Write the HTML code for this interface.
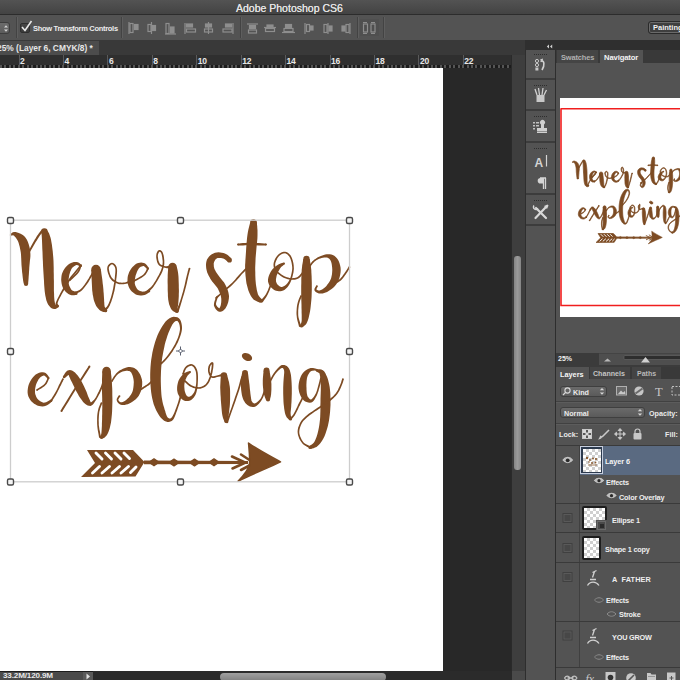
<!DOCTYPE html>
<html><head><meta charset="utf-8">
<style>
*{margin:0;padding:0;box-sizing:border-box}
html,body{width:680px;height:680px;overflow:hidden;background:#535353;font-family:"Liberation Sans",sans-serif;position:relative}
.a{position:absolute}
#title{left:0;top:0;width:680px;height:15px;background:linear-gradient(#535353,#434343);border-bottom:1px solid #2c2c2c}
#title span{position:absolute;left:236px;top:1.5px;font-size:10.5px;color:#e4e4e4;letter-spacing:0px;text-shadow:0 0 0.4px #e4e4e4}
#opts{left:0;top:15px;width:680px;height:25px;background:#535353}
.sep{position:absolute;top:19px;width:1px;height:18px;background:#414141;border-right:1px solid #5f5f5f}
#tabbar{left:0;top:40px;width:525px;height:15px;background:#393939}
#tab{left:0;top:41px;width:99px;height:14px;background:#4c4c4c}
#tab span{position:absolute;left:-3px;top:2px;font-size:8.4px;font-weight:bold;color:#e6e6e6;white-space:nowrap}
#ruler{left:0;top:55px;width:512px;height:13px;background:#2f2f2f}
#canvas{left:0;top:68px;width:443px;height:603px;background:#fff;overflow:hidden}
#paste{left:443px;top:68px;width:69px;height:603px;background:#282828}
#vtrack{left:511px;top:55px;width:14px;height:625px;background:#3e3e3e;border-left:1px solid #2a2a2a}
#status{left:0;top:671px;width:512px;height:9px;background:#2b2b2b}
#dock{left:525px;top:40px;width:31px;height:640px;background:#535353;border-left:1px solid #2e2e2e;border-right:1px solid #2e2e2e}
#rpanel{left:556px;top:40px;width:124px;height:640px;background:#535353}
.ck{background-color:#fff;background-image:linear-gradient(45deg,#cfcfcf 25%,transparent 25%,transparent 75%,#cfcfcf 75%),linear-gradient(45deg,#cfcfcf 25%,transparent 25%,transparent 75%,#cfcfcf 75%);background-size:6px 6px;background-position:0 0,3px 3px}
.t9{font-size:9px;color:#e0e0e0;white-space:nowrap;position:absolute}
</style></head><body>
<div id="title" class="a"><span>Adobe Photoshop CS6</span></div>
<div id="opts" class="a">
 <div class="a" style="left:-4px;top:7px;width:14px;height:12px;border-radius:3px;background:linear-gradient(#6c6c6c,#5c5c5c);border:1px solid #3e3e3e"></div>
 <svg class="a" style="left:3px;top:9px" width="6" height="9"><path d="M1 3.5L3 1.2L5 3.5ZM1 5.5L3 7.8L5 5.5Z" fill="#d6d6d6"/></svg>
 <div class="a" style="left:16px;top:2px;width:1px;height:21px;background:#434343"></div><div class="a" style="left:17px;top:2px;width:1px;height:21px;background:#5e5e5e"></div>
 <div class="a" style="left:20px;top:8px;width:10px;height:10px;border-radius:2px;background:linear-gradient(#454545,#3c3c3c);border:1px solid #2e2e2e"></div>
 <svg class="a" style="left:19px;top:4px" width="14" height="14"><path d="M3 8L6 11.5L12.5 2" stroke="#e8e8e8" stroke-width="1.6" fill="none"/></svg>
 <span class="a" style="left:33px;top:9px;font-size:7.5px;color:#ececec;white-space:nowrap;font-weight:bold;letter-spacing:-0.3px">Show Transform Controls</span>
 <div class="a" style="left:121px;top:2px;width:1px;height:21px;background:#434343"></div><div class="a" style="left:122px;top:2px;width:1px;height:21px;background:#5e5e5e"></div>
 <div class="a" style="left:240px;top:2px;width:1px;height:21px;background:#434343"></div><div class="a" style="left:241px;top:2px;width:1px;height:21px;background:#5e5e5e"></div>
 <div class="a" style="left:357px;top:2px;width:1px;height:21px;background:#434343"></div><div class="a" style="left:358px;top:2px;width:1px;height:21px;background:#5e5e5e"></div>
 <div class="a" style="left:360px;top:4px;width:19px;height:17px;background:#4f4f4f"></div>
 <div class="a" style="left:383px;top:2px;width:1px;height:21px;background:#434343"></div><div class="a" style="left:384px;top:2px;width:1px;height:21px;background:#5e5e5e"></div>
 <svg class="a" style="left:0;top:0" width="400" height="25" fill="none" stroke="#8e8e8e" stroke-width="1.2">
  <g id="ic1"><rect x="130" y="8.5" width="3" height="9"/><rect x="134.5" y="9.5" width="3.5" height="5" fill="#8e8e8e"/><path d="M129 7v12"/></g>
  <g><path d="M151.5 7v12"/><rect x="148" y="9.5" width="3" height="7"/><rect x="152.5" y="10.5" width="3" height="5" fill="#8e8e8e"/></g>
  <g><path d="M165 19h11"/><rect x="166" y="8.5" width="3" height="10"/><rect x="170.5" y="12" width="3.5" height="6" fill="#8e8e8e"/></g>
  <g><path d="M185 8v11"/><rect x="186.5" y="9" width="6" height="3" fill="#8e8e8e"/><rect x="186.5" y="14" width="9" height="3"/></g>
  <g><path d="M208.5 7v12"/><rect x="205.5" y="9" width="6" height="3" fill="#8e8e8e"/><rect x="204.5" y="14" width="8" height="3"/></g>
  <g><path d="M233 8v11"/><rect x="225.5" y="9" width="6" height="3" fill="#8e8e8e"/><rect x="223" y="14" width="9" height="3"/></g>
  <g><path d="M247 9h11"/><rect x="249.5" y="10.5" width="6" height="3" fill="#8e8e8e"/><rect x="248.5" y="15" width="8" height="3"/></g>
  <g><path d="M264 12.5h12"/><rect x="267" y="10" width="6" height="3" fill="#8e8e8e"/><rect x="265.5" y="13.5" width="9" height="3"/></g>
  <g><path d="M282 17.5h13"/><rect x="285.5" y="9.5" width="6" height="3" fill="#8e8e8e"/><rect x="284" y="13.5" width="9" height="3"/></g>
  <g><path d="M305 8v11"/><rect x="306.5" y="9.5" width="3" height="7"/><rect x="310" y="11" width="3" height="4" fill="#8e8e8e"/></g>
  <g><path d="M328 8v11"/><rect x="324" y="9.5" width="3" height="8"/><rect x="329" y="11" width="3" height="5" fill="#8e8e8e"/></g>
  <g><path d="M350 8v11"/><rect x="346" y="9.5" width="3" height="8"/><rect x="342" y="11" width="3" height="5" fill="#8e8e8e"/></g>
  <g><rect x="363.5" y="9" width="4" height="8"/><rect x="371" y="9" width="4" height="8"/><path d="M363 7.5h4M371 7.5h4M363 18.5h4M371 18.5h4"/></g>
 </svg>
 <div class="a" style="left:648px;top:6px;width:40px;height:13px;border-radius:3px;background:#3f3f3f;border:1px solid #2a2a2a;box-shadow:inset 0 0 0 1px #6a6a6a"></div>
 <span class="a" style="left:653px;top:8px;font-size:7.5px;color:#f0f0f0;white-space:nowrap;font-weight:bold">Painting</span>
</div>
<div id="tabbar" class="a"></div>
<div id="tab" class="a"><span>25% (Layer 6, CMYK/8) *</span></div>
<div id="ruler" class="a"><div class="a" style="left:18.5px;top:0;width:1px;height:13px;background:#5a5a5a"></div><span class="a" style="left:20.0px;top:1px;font-size:8.5px;color:#e8e8e8;font-weight:bold;letter-spacing:-0.2px">2</span><div class="a" style="left:62.9px;top:0;width:1px;height:13px;background:#5a5a5a"></div><span class="a" style="left:64.4px;top:1px;font-size:8.5px;color:#e8e8e8;font-weight:bold;letter-spacing:-0.2px">4</span><div class="a" style="left:107.4px;top:0;width:1px;height:13px;background:#5a5a5a"></div><span class="a" style="left:108.9px;top:1px;font-size:8.5px;color:#e8e8e8;font-weight:bold;letter-spacing:-0.2px">6</span><div class="a" style="left:151.8px;top:0;width:1px;height:13px;background:#5a5a5a"></div><span class="a" style="left:153.3px;top:1px;font-size:8.5px;color:#e8e8e8;font-weight:bold;letter-spacing:-0.2px">8</span><div class="a" style="left:196.2px;top:0;width:1px;height:13px;background:#5a5a5a"></div><span class="a" style="left:197.7px;top:1px;font-size:8.5px;color:#e8e8e8;font-weight:bold;letter-spacing:-0.2px">10</span><div class="a" style="left:240.7px;top:0;width:1px;height:13px;background:#5a5a5a"></div><span class="a" style="left:242.2px;top:1px;font-size:8.5px;color:#e8e8e8;font-weight:bold;letter-spacing:-0.2px">12</span><div class="a" style="left:285.1px;top:0;width:1px;height:13px;background:#5a5a5a"></div><span class="a" style="left:286.6px;top:1px;font-size:8.5px;color:#e8e8e8;font-weight:bold;letter-spacing:-0.2px">14</span><div class="a" style="left:329.5px;top:0;width:1px;height:13px;background:#5a5a5a"></div><span class="a" style="left:331.0px;top:1px;font-size:8.5px;color:#e8e8e8;font-weight:bold;letter-spacing:-0.2px">16</span><div class="a" style="left:373.9px;top:0;width:1px;height:13px;background:#5a5a5a"></div><span class="a" style="left:375.4px;top:1px;font-size:8.5px;color:#e8e8e8;font-weight:bold;letter-spacing:-0.2px">18</span><div class="a" style="left:418.4px;top:0;width:1px;height:13px;background:#5a5a5a"></div><span class="a" style="left:419.9px;top:1px;font-size:8.5px;color:#e8e8e8;font-weight:bold;letter-spacing:-0.2px">20</span><div class="a" style="left:462.8px;top:0;width:1px;height:13px;background:#5a5a5a"></div><span class="a" style="left:464.3px;top:1px;font-size:8.5px;color:#e8e8e8;font-weight:bold;letter-spacing:-0.2px">22</span><div class="a" style="left:0;top:9.5px;width:512px;height:3px;background:repeating-linear-gradient(90deg,#555 0,#555 2px,#1c1c1c 2px,#1c1c1c 4.443px)"></div></div>
<div id="canvas" class="a">
<svg width="443" height="603" viewBox="0 68 443 603" style="position:absolute;left:0;top:0">
<g id="art" fill="#7d4b23"><path d="M10.8 235.7L11.3 235.6L12.1 235.4L12.8 235.3L13.5 235.4L13.9 235.6L14.3 236.0L14.9 236.7L15.7 237.6L16.5 238.7L17.3 239.9L17.9 241.1L18.4 242.2L18.8 243.4L19.2 245.0L19.7 246.8L20.1 248.7L20.5 250.7L20.8 252.6L21.0 254.4L21.1 256.3L21.2 258.3L21.3 260.5L21.4 262.7L21.5 265.0L21.7 267.3L21.9 269.6L22.1 272.0L22.4 274.2L22.6 276.3L22.8 278.1L23.0 279.6L23.2 280.9L23.4 282.0L23.6 282.9L23.8 283.6L23.9 284.1L28.1 283.9L28.2 283.3L28.2 282.6L28.3 281.7L28.4 280.6L28.5 279.4L28.6 277.9L28.7 276.2L28.9 274.1L29.0 271.9L29.2 269.5L29.3 267.2L29.5 265.0L29.7 262.9L29.9 260.8L30.2 258.6L30.4 256.3L30.4 253.8L30.2 251.4L29.9 249.0L29.4 246.7L28.7 244.3L27.9 242.0L26.9 239.8L25.6 237.8L24.1 236.1L22.4 234.7L20.6 233.7L18.8 232.9L17.2 232.4L15.7 232.0L14.2 231.9L12.8 232.3L11.8 232.9L11.1 233.5L10.6 234.0L10.2 234.3Z"/><path d="M9.8 235.0a0.75 0.75 0 1 0 1.50 0a0.75 0.75 0 1 0 -1.50 0ZM23.9 284.0a2.12 2.12 0 1 0 4.24 0a2.12 2.12 0 1 0 -4.24 0Z"/><path d="M29.7 252.4L30.3 251.4L31.1 250.1L32.0 248.4L33.0 246.7L34.0 245.0L34.9 243.5L35.7 242.1L36.6 240.7L37.5 239.3L38.3 238.0L39.1 236.7L39.9 235.6L40.7 234.6L41.5 233.6L42.2 232.8L42.9 232.0L43.5 231.3L44.0 230.8L42.0 229.2L41.6 229.7L41.1 230.4L40.4 231.2L39.7 232.2L38.9 233.3L38.1 234.4L37.3 235.6L36.5 236.8L35.7 238.2L34.8 239.6L34.0 241.1L33.1 242.5L32.3 244.1L31.3 245.8L30.4 247.6L29.5 249.2L28.8 250.6L28.3 251.6Z"/><path d="M28.1 252.0a0.85 0.85 0 1 0 1.70 0a0.85 0.85 0 1 0 -1.70 0ZM41.8 230.0a1.25 1.25 0 1 0 2.50 0a1.25 1.25 0 1 0 -2.50 0Z"/><path d="M41.4 232.3L41.5 233.2L41.6 234.4L41.7 235.6L41.8 237.1L41.9 238.7L42.0 240.6L42.1 242.9L42.2 245.7L42.3 248.7L42.5 251.9L42.6 255.1L42.7 258.3L42.9 261.5L43.0 264.9L43.2 268.4L43.4 271.8L43.6 275.1L43.8 278.2L44.0 281.0L44.1 283.8L44.3 286.4L44.5 288.9L44.7 291.2L45.0 293.4L45.3 295.4L45.7 297.2L46.0 298.8L46.4 300.4L46.9 301.8L47.5 303.2L48.1 304.5L48.9 305.6L49.7 306.6L50.6 307.5L51.6 308.2L52.8 308.8L54.2 309.1L55.5 308.9L56.5 308.5L57.2 308.1L57.7 307.7L57.9 307.5L57.1 304.5L56.6 304.5L55.9 304.6L55.4 304.6L55.0 304.4L55.0 304.3L55.2 304.2L55.3 304.0L55.2 303.6L55.0 303.0L54.8 302.4L54.7 301.7L54.5 300.8L54.4 299.9L54.3 298.8L54.2 297.5L54.1 296.1L54.1 294.4L54.0 292.6L53.9 290.6L53.9 288.4L53.9 286.0L53.9 283.4L53.9 280.7L53.8 277.8L53.8 274.7L53.7 271.5L53.7 268.0L53.6 264.5L53.5 261.0L53.3 257.7L53.0 254.4L52.7 251.1L52.3 247.9L51.9 244.8L51.4 241.9L51.0 239.4L50.4 237.2L49.7 235.2L49.1 233.6L48.4 232.3L47.9 231.4L47.6 230.7Z"/><path d="M41.3 231.5a3.18 3.18 0 1 0 6.36 0a3.18 3.18 0 1 0 -6.36 0ZM55.9 306.0a1.59 1.59 0 1 0 3.18 0a1.59 1.59 0 1 0 -3.18 0Z"/><path d="M58.1 305.3L58.0 304.9L57.8 304.5L57.6 304.2L57.6 303.8L57.6 303.2L57.8 302.3L58.3 301.1L58.9 299.6L59.7 298.0L60.7 296.2L61.7 294.3L62.7 292.4L63.9 290.4L65.2 288.2L66.5 285.9L67.9 283.7L69.3 281.5L70.7 279.5L72.1 277.6L73.5 275.8L75.0 274.0L76.4 272.3L77.6 270.8L78.7 269.5L79.5 268.5L80.2 267.6L80.7 266.9L81.1 266.3L81.4 265.9L81.7 265.5L80.3 264.5L80.0 264.9L79.7 265.3L79.3 265.9L78.8 266.6L78.2 267.4L77.3 268.5L76.3 269.7L75.1 271.2L73.7 272.9L72.2 274.7L70.7 276.6L69.3 278.5L67.9 280.6L66.5 282.8L65.1 285.1L63.7 287.3L62.4 289.5L61.3 291.6L60.2 293.5L59.2 295.4L58.3 297.2L57.4 298.9L56.7 300.4L56.2 301.7L55.8 302.8L55.7 303.8L55.7 304.5L55.8 305.1L55.9 305.5L55.9 305.7Z"/><path d="M55.9 305.5a1.10 1.10 0 1 0 2.20 0a1.10 1.10 0 1 0 -2.20 0ZM80.2 265.0a0.85 0.85 0 1 0 1.70 0a0.85 0.85 0 1 0 -1.70 0Z"/><path d="M81.6 265.2L81.2 264.8L80.6 264.3L79.9 263.6L78.9 262.8L77.8 262.2L76.5 261.9L75.2 261.9L73.8 262.1L72.4 262.4L71.0 262.9L69.5 263.7L68.1 264.7L66.8 265.9L65.6 267.2L64.5 268.8L63.4 270.5L62.6 272.2L61.9 274.1L61.5 276.1L61.3 278.1L61.2 280.1L61.4 282.1L61.7 284.0L62.2 285.9L62.9 287.7L63.8 289.3L64.8 290.7L65.9 292.0L67.1 293.1L68.4 294.1L70.0 294.8L71.5 295.2L73.0 295.2L74.2 295.2L75.1 295.1L75.8 295.1L76.2 291.9L75.5 291.7L74.6 291.5L73.6 291.1L72.7 290.8L72.0 290.3L71.6 289.9L71.1 289.2L70.5 288.3L70.0 287.3L69.5 286.2L69.1 285.2L68.8 284.1L68.7 282.9L68.6 281.6L68.6 280.1L68.7 278.6L68.9 277.2L69.1 275.9L69.4 274.6L69.8 273.2L70.2 271.8L70.8 270.5L71.3 269.3L71.9 268.3L72.5 267.6L73.2 266.9L74.1 266.2L75.0 265.7L75.8 265.3L76.5 265.1L77.0 265.0L77.7 265.2L78.4 265.6L79.2 266.0L79.9 266.5L80.4 266.8Z"/><path d="M80.0 266.0a1.00 1.00 0 1 0 2.00 0a1.00 1.00 0 1 0 -2.00 0ZM74.4 293.5a1.59 1.59 0 1 0 3.18 0a1.59 1.59 0 1 0 -3.18 0Z"/><path d="M79.7 265.7L79.5 266.4L79.2 267.2L78.9 268.2L78.6 269.3L78.0 270.4L77.3 271.5L76.3 272.7L74.8 274.2L73.3 275.8L71.7 277.2L70.4 278.5L69.4 279.4L70.6 280.6L71.5 279.7L72.9 278.5L74.4 277.0L76.0 275.4L77.5 273.9L78.7 272.5L79.5 271.2L80.1 270.0L80.6 268.8L80.9 267.7L81.1 266.9L81.3 266.3Z"/><path d="M79.7 266.0a0.85 0.85 0 1 0 1.70 0a0.85 0.85 0 1 0 -1.70 0ZM69.2 280.0a0.85 0.85 0 1 0 1.70 0a0.85 0.85 0 1 0 -1.70 0Z"/><path d="M75.5 294.1L76.1 293.8L77.0 293.4L78.1 292.8L79.3 292.2L80.5 291.5L81.5 290.7L82.5 289.8L83.4 288.8L84.2 287.8L85.0 286.8L85.9 285.6L86.7 284.5L87.6 283.2L88.5 281.9L89.3 280.4L90.2 279.0L91.0 277.7L91.7 276.4L92.4 275.2L93.0 274.0L93.6 272.9L94.1 271.8L94.5 271.0L94.8 270.4L93.2 269.6L92.9 270.3L92.5 271.1L92.0 272.1L91.5 273.2L90.9 274.4L90.3 275.6L89.5 276.8L88.8 278.2L87.9 279.6L87.0 280.9L86.2 282.3L85.3 283.5L84.5 284.7L83.7 285.8L82.9 286.8L82.1 287.8L81.3 288.6L80.5 289.3L79.5 289.9L78.4 290.5L77.3 290.9L76.2 291.3L75.2 291.6L74.5 291.9Z"/><path d="M73.8 293.0a1.25 1.25 0 1 0 2.50 0a1.25 1.25 0 1 0 -2.50 0ZM93.2 270.0a0.85 0.85 0 1 0 1.70 0a0.85 0.85 0 1 0 -1.70 0Z"/><path d="M91.3 270.0L91.3 271.1L91.4 272.6L91.4 274.5L91.5 276.5L91.6 278.5L91.7 280.5L91.8 282.4L91.9 284.4L92.0 286.5L92.1 288.6L92.2 290.6L92.5 292.6L92.7 294.5L93.1 296.3L93.4 298.1L93.8 299.9L94.3 301.6L94.9 303.1L95.5 304.6L96.2 305.9L96.9 307.0L97.7 308.1L98.6 309.0L99.5 309.9L100.5 310.8L101.6 311.3L102.7 311.7L103.5 311.9L104.1 312.0L104.6 312.1L106.4 308.9L106.1 308.5L105.6 308.1L105.1 307.5L104.8 307.0L104.6 306.5L104.5 306.1L104.5 305.5L104.4 304.7L104.3 303.9L104.3 303.0L104.2 302.0L104.1 300.9L104.1 299.6L104.0 298.2L103.9 296.6L103.8 295.0L103.7 293.2L103.5 291.4L103.4 289.6L103.2 287.6L103.0 285.6L102.7 283.6L102.5 281.5L102.3 279.5L102.0 277.6L101.7 275.5L101.4 273.5L101.2 271.7L100.9 270.2L100.7 269.0Z"/><path d="M91.2 269.5a4.77 4.77 0 1 0 9.54 0a4.77 4.77 0 1 0 -9.54 0ZM103.6 310.5a1.85 1.85 0 1 0 3.71 0a1.85 1.85 0 1 0 -3.71 0Z"/><path d="M105.9 310.9L106.3 310.4L106.8 309.8L107.5 309.0L108.3 308.0L109.0 306.8L109.8 305.4L110.4 303.7L111.2 301.9L111.9 299.8L112.6 297.7L113.2 295.4L113.8 293.2L114.4 290.9L114.9 288.5L115.3 286.1L115.7 283.7L116.1 281.3L116.3 279.1L116.6 277.0L116.8 275.0L117.0 273.0L117.1 271.1L117.0 269.4L116.8 267.8L116.4 266.4L115.7 265.2L114.9 264.2L114.0 263.4L113.0 262.9L112.0 262.7L110.9 262.9L109.9 263.4L109.0 264.2L108.1 265.3L107.5 266.5L107.2 267.9L107.2 269.5L107.5 271.3L108.0 273.2L108.7 275.1L109.4 276.9L110.3 278.5L111.3 279.7L112.4 280.9L113.7 281.8L115.0 282.6L116.4 283.3L117.7 283.8L119.1 284.2L120.6 284.3L122.1 284.3L123.5 284.3L124.9 284.1L126.2 283.8L127.5 283.4L128.7 282.9L129.9 282.2L131.0 281.6L131.8 281.1L132.4 280.7L131.6 279.3L130.9 279.6L130.1 280.2L129.1 280.8L128.0 281.3L126.9 281.8L125.8 282.2L124.6 282.4L123.4 282.6L122.0 282.7L120.7 282.6L119.4 282.5L118.3 282.2L117.1 281.7L115.9 281.1L114.7 280.4L113.6 279.6L112.6 278.6L111.7 277.5L111.0 276.2L110.2 274.5L109.6 272.7L109.2 270.9L108.9 269.3L108.8 268.1L109.1 267.1L109.5 266.2L110.2 265.4L110.9 264.8L111.6 264.5L112.0 264.3L112.4 264.4L113.0 264.8L113.7 265.4L114.3 266.2L114.8 267.1L115.2 268.2L115.4 269.5L115.4 271.1L115.3 272.8L115.1 274.8L114.9 276.8L114.7 278.9L114.4 281.1L114.0 283.4L113.6 285.8L113.2 288.2L112.7 290.6L112.2 292.8L111.6 295.0L111.0 297.2L110.3 299.3L109.6 301.3L108.9 303.1L108.2 304.6L107.5 305.8L106.8 306.8L106.0 307.5L105.2 308.2L104.6 308.7L104.1 309.1Z"/><path d="M103.8 310.0a1.25 1.25 0 1 0 2.50 0a1.25 1.25 0 1 0 -2.50 0ZM131.2 280.0a0.85 0.85 0 1 0 1.70 0a0.85 0.85 0 1 0 -1.70 0Z"/><path d="M148.7 267.8L148.3 267.3L147.8 266.5L147.1 265.5L146.2 264.5L145.1 263.6L143.9 263.0L142.5 262.7L141.2 262.6L139.7 262.7L138.2 263.0L136.7 263.6L135.2 264.5L133.9 265.7L132.5 267.1L131.3 268.6L130.2 270.3L129.2 272.1L128.5 273.9L127.9 275.8L127.6 277.7L127.5 279.6L127.5 281.6L127.7 283.5L128.2 285.3L128.8 287.1L129.7 288.7L130.7 290.2L131.8 291.5L133.1 292.6L134.4 293.6L135.8 294.4L137.3 294.9L138.8 295.3L140.3 295.4L141.7 295.5L143.1 295.3L144.6 295.0L145.9 294.4L147.1 293.7L148.2 293.0L149.0 292.5L149.6 292.1L148.4 289.9L147.7 290.2L146.8 290.6L145.8 291.0L144.7 291.4L143.7 291.6L142.9 291.7L142.0 291.5L141.0 291.3L140.0 290.9L139.0 290.5L138.2 290.0L137.6 289.4L137.0 288.7L136.4 287.8L135.9 286.8L135.4 285.7L135.1 284.7L134.8 283.7L134.8 282.6L134.8 281.4L134.8 280.1L135.0 278.7L135.3 277.3L135.5 276.1L135.9 274.8L136.4 273.4L136.9 271.9L137.6 270.6L138.2 269.4L138.8 268.5L139.4 267.8L140.1 267.2L140.8 266.7L141.7 266.4L142.5 266.2L143.1 266.0L143.7 266.1L144.4 266.5L145.3 267.2L146.0 268.0L146.7 268.7L147.3 269.2Z"/><path d="M147.0 268.5a1.00 1.00 0 1 0 2.00 0a1.00 1.00 0 1 0 -2.00 0ZM147.8 291.0a1.25 1.25 0 1 0 2.50 0a1.25 1.25 0 1 0 -2.50 0Z"/><path d="M147.2 268.1L146.9 268.8L146.4 269.8L145.9 271.0L145.2 272.2L144.4 273.3L143.4 274.4L142.1 275.4L140.3 276.5L138.3 277.7L136.4 278.7L134.8 279.6L133.6 280.3L134.4 281.7L135.6 281.1L137.2 280.2L139.2 279.1L141.2 278.0L143.0 276.8L144.6 275.6L145.7 274.4L146.6 273.1L147.4 271.8L148.0 270.6L148.4 269.6L148.8 268.9Z"/><path d="M147.2 268.5a0.85 0.85 0 1 0 1.70 0a0.85 0.85 0 1 0 -1.70 0ZM133.2 281.0a0.85 0.85 0 1 0 1.70 0a0.85 0.85 0 1 0 -1.70 0Z"/><path d="M148.8 291.8L149.3 291.3L150.0 290.6L150.9 289.7L151.8 288.7L152.8 287.7L153.7 286.5L154.5 285.3L155.4 284.0L156.3 282.6L157.1 281.2L158.0 279.8L158.7 278.4L159.5 277.1L160.2 275.7L161.0 274.4L161.7 273.0L162.3 271.7L162.8 270.3L163.2 268.9L163.6 267.6L163.9 266.2L164.2 264.9L164.3 263.4L164.3 262.0L164.3 260.4L164.1 258.7L163.9 257.0L163.6 255.3L163.2 253.9L162.8 252.7L162.3 251.7L161.7 251.0L161.0 250.4L160.2 250.1L159.4 250.0L158.6 250.3L157.9 250.8L157.4 251.6L156.9 252.5L156.5 253.6L156.3 254.8L156.2 256.0L156.2 257.3L156.4 258.8L156.7 260.3L157.1 261.9L157.6 263.3L158.3 264.5L159.2 265.5L160.3 266.2L161.5 266.8L162.7 267.2L163.8 267.5L164.8 267.8L165.8 268.1L166.9 268.2L167.9 268.2L168.8 268.2L169.6 268.2L170.1 268.2L169.9 265.8L169.4 265.8L168.6 266.0L167.8 266.1L166.9 266.3L166.1 266.3L165.2 266.2L164.2 265.9L163.2 265.6L162.1 265.2L161.2 264.8L160.3 264.2L159.7 263.5L159.2 262.6L158.7 261.3L158.3 259.9L158.1 258.5L157.9 257.1L157.8 256.0L157.9 255.0L158.1 254.1L158.5 253.2L158.8 252.5L159.2 251.9L159.4 251.7L159.6 251.7L159.8 251.7L160.1 251.9L160.5 252.2L160.9 252.6L161.2 253.3L161.6 254.3L161.9 255.7L162.2 257.3L162.4 258.9L162.6 260.5L162.7 262.0L162.6 263.3L162.5 264.6L162.3 265.9L162.0 267.2L161.6 268.4L161.2 269.7L160.7 271.0L160.1 272.3L159.5 273.6L158.8 274.9L158.0 276.2L157.3 277.6L156.5 278.9L155.7 280.4L154.9 281.8L154.0 283.1L153.2 284.4L152.3 285.5L151.5 286.5L150.5 287.4L149.5 288.3L148.6 289.1L147.8 289.7L147.2 290.2Z"/><path d="M146.9 291.0a1.10 1.10 0 1 0 2.20 0a1.10 1.10 0 1 0 -2.20 0ZM168.8 267.0a1.25 1.25 0 1 0 2.50 0a1.25 1.25 0 1 0 -2.50 0Z"/><path d="M168.3 267.3L168.2 268.1L168.1 269.2L168.0 270.4L167.9 271.8L167.8 273.4L167.7 275.2L167.7 277.3L167.6 279.7L167.6 282.4L167.7 285.1L167.7 287.7L167.7 290.1L167.8 292.2L167.9 294.1L167.9 296.0L168.1 297.9L168.2 299.6L168.5 301.3L168.8 302.8L169.1 304.2L169.6 305.5L170.1 306.8L170.6 308.0L171.3 309.2L172.1 310.3L173.0 311.1L174.0 311.7L174.8 312.1L175.4 312.4L175.8 312.5L178.2 310.5L178.0 310.0L177.8 309.3L177.7 308.6L177.6 308.0L177.6 307.4L177.7 306.8L177.9 306.2L178.0 305.4L178.1 304.4L178.3 303.3L178.4 302.1L178.5 300.7L178.6 299.2L178.7 297.7L178.8 296.0L178.8 294.1L178.9 292.1L178.9 289.9L178.8 287.6L178.8 284.9L178.7 282.2L178.6 279.5L178.5 277.0L178.3 274.8L178.1 272.9L177.8 271.2L177.5 269.7L177.2 268.5L176.9 267.5L176.7 266.7Z"/><path d="M168.3 267.0a4.24 4.24 0 1 0 8.48 0a4.24 4.24 0 1 0 -8.48 0ZM175.4 311.5a1.59 1.59 0 1 0 3.18 0a1.59 1.59 0 1 0 -3.18 0Z"/><path d="M178.6 311.4L179.0 310.4L179.4 308.9L180.0 307.2L180.6 305.3L181.2 303.3L181.8 301.3L182.4 299.1L183.1 296.8L183.9 294.3L184.6 291.8L185.2 289.4L185.8 287.2L186.3 285.2L186.8 283.2L187.2 281.3L187.6 279.5L188.0 277.8L188.3 276.2L188.7 274.7L189.1 273.2L189.5 271.8L189.8 270.5L190.1 269.5L190.3 268.7L188.7 268.3L188.5 269.0L188.2 270.1L187.8 271.3L187.5 272.7L187.1 274.2L186.7 275.8L186.3 277.4L185.9 279.1L185.5 280.9L185.1 282.8L184.7 284.8L184.2 286.8L183.6 289.0L183.0 291.4L182.3 293.8L181.6 296.3L180.9 298.6L180.2 300.7L179.5 302.7L178.8 304.7L178.0 306.5L177.4 308.2L176.8 309.6L176.4 310.6Z"/><path d="M176.3 311.0a1.20 1.20 0 1 0 2.40 0a1.20 1.20 0 1 0 -2.40 0ZM188.7 268.5a0.85 0.85 0 1 0 1.70 0a0.85 0.85 0 1 0 -1.70 0Z"/><path d="M231.0 258.2L230.5 257.7L229.8 257.0L228.8 256.1L227.7 255.1L226.4 254.2L224.9 253.5L223.4 253.0L221.9 252.7L220.2 252.4L218.5 252.3L216.8 252.4L215.0 252.8L213.4 253.4L211.8 254.3L210.4 255.3L209.1 256.6L208.0 258.0L207.0 259.6L206.4 261.4L206.1 263.3L206.0 265.1L206.1 266.9L206.3 268.8L206.7 270.6L207.2 272.4L207.9 274.1L208.7 275.8L209.6 277.3L210.5 278.9L211.5 280.4L212.6 282.0L213.9 283.5L215.1 284.9L216.1 286.2L217.1 287.4L217.8 288.6L218.5 289.9L219.2 291.4L219.8 292.9L220.3 294.3L220.8 295.7L221.0 296.9L221.2 298.1L221.3 299.5L221.3 301.0L221.2 302.5L221.0 303.8L220.8 304.9L220.6 305.8L220.3 306.6L220.0 307.3L219.7 307.7L219.6 308.0L219.7 308.2L219.5 308.2L218.8 307.9L217.9 307.3L217.1 306.5L216.5 305.6L216.1 304.8L216.0 303.8L216.2 302.5L216.6 301.0L217.1 299.5L217.5 298.2L217.8 297.3L216.2 296.7L215.9 297.6L215.4 298.9L214.8 300.4L214.3 302.0L214.0 303.7L213.9 305.2L214.3 306.6L215.0 308.0L215.8 309.2L216.8 310.3L217.9 311.2L219.3 311.8L220.8 311.8L222.2 311.3L223.4 310.5L224.4 309.6L225.4 308.4L226.2 307.1L226.9 305.7L227.6 304.0L228.2 302.2L228.6 300.3L228.9 298.2L229.0 296.1L228.7 294.0L228.3 292.0L227.7 290.0L226.9 288.1L226.1 286.2L225.2 284.4L224.1 282.6L222.8 280.9L221.6 279.4L220.4 278.0L219.4 276.8L218.5 275.6L217.6 274.3L216.7 273.0L215.9 271.7L215.3 270.6L214.7 269.5L214.3 268.4L214.0 267.3L213.8 266.2L213.8 265.0L213.7 264.0L213.8 263.1L214.0 262.4L214.2 261.7L214.6 260.9L215.1 260.0L215.7 259.3L216.4 258.7L217.0 258.2L217.7 258.0L218.6 257.9L219.8 257.9L221.0 258.0L222.1 258.3L223.1 258.5L223.9 258.8L224.7 259.3L225.7 260.0L226.5 260.7L227.3 261.3L228.0 261.8Z"/><path d="M227.1 260.0a2.39 2.39 0 1 0 4.77 0a2.39 2.39 0 1 0 -4.77 0ZM216.2 297.0a0.85 0.85 0 1 0 1.70 0a0.85 0.85 0 1 0 -1.70 0Z"/><path d="M216.6 298.6L217.4 297.9L218.6 296.9L220.0 295.6L221.5 294.3L223.1 292.9L224.6 291.6L226.0 290.4L227.5 289.1L229.1 287.8L230.6 286.4L232.1 285.0L233.6 283.6L235.0 282.1L236.5 280.5L237.8 278.9L239.2 277.4L240.4 275.9L241.6 274.6L242.8 273.3L244.0 272.2L245.1 271.0L246.1 270.1L247.0 269.2L247.6 268.6L246.4 267.4L245.8 268.0L244.9 268.8L243.9 269.8L242.8 271.0L241.6 272.2L240.4 273.4L239.2 274.8L237.9 276.3L236.5 277.8L235.2 279.4L233.8 280.9L232.4 282.4L231.0 283.8L229.5 285.1L227.9 286.5L226.4 287.8L224.9 289.1L223.4 290.4L222.0 291.7L220.4 293.0L218.9 294.4L217.5 295.6L216.3 296.6L215.4 297.4Z"/><path d="M215.2 298.0a0.85 0.85 0 1 0 1.70 0a0.85 0.85 0 1 0 -1.70 0ZM246.2 268.0a0.85 0.85 0 1 0 1.70 0a0.85 0.85 0 1 0 -1.70 0Z"/><path d="M250.1 222.7L249.8 223.9L249.4 225.5L248.9 227.4L248.4 229.6L247.9 232.0L247.5 234.6L247.1 237.5L246.8 240.8L246.5 244.4L246.2 248.0L246.0 251.5L245.8 254.6L245.6 257.5L245.4 260.1L245.3 262.6L245.1 265.0L245.1 267.5L245.2 270.1L245.3 272.8L245.5 275.4L245.8 278.1L246.1 280.8L246.5 283.4L247.1 285.8L247.7 288.1L248.3 290.2L249.1 292.3L250.0 294.3L250.9 296.1L252.1 297.8L253.5 299.4L255.2 300.5L256.7 301.3L258.1 301.9L259.2 302.2L259.9 302.5L262.1 299.5L261.4 298.8L260.6 298.0L259.7 297.1L258.9 296.1L258.3 295.1L257.9 294.2L257.6 293.0L257.2 291.6L256.8 289.9L256.5 288.1L256.2 286.2L255.9 284.2L255.7 282.1L255.5 279.8L255.4 277.4L255.3 274.9L255.3 272.3L255.2 269.9L255.2 267.6L255.3 265.3L255.4 263.1L255.5 260.7L255.6 258.1L255.8 255.4L256.1 252.3L256.4 248.8L256.7 245.3L257.1 241.7L257.4 238.4L257.5 235.4L257.5 232.8L257.5 230.3L257.3 228.1L257.2 226.1L257.0 224.5L256.9 223.3Z"/><path d="M250.1 223.0a3.45 3.45 0 1 0 6.89 0a3.45 3.45 0 1 0 -6.89 0ZM259.1 301.0a1.85 1.85 0 1 0 3.71 0a1.85 1.85 0 1 0 -3.71 0Z"/><path d="M263.0 301.7L263.5 301.0L264.2 300.0L265.1 298.7L266.0 297.4L266.9 295.9L267.7 294.4L268.5 292.8L269.3 291.1L270.0 289.2L270.7 287.4L271.3 285.7L271.8 284.2L272.2 282.9L272.4 281.6L272.6 280.5L272.7 279.5L272.8 278.7L272.8 278.1L271.2 277.9L271.1 278.5L271.0 279.3L270.9 280.3L270.8 281.3L270.5 282.5L270.2 283.8L269.7 285.2L269.1 286.9L268.5 288.6L267.8 290.4L267.0 292.1L266.3 293.6L265.4 294.9L264.4 296.3L263.4 297.5L262.5 298.6L261.6 299.6L261.0 300.3Z"/><path d="M260.8 301.0a1.20 1.20 0 1 0 2.40 0a1.20 1.20 0 1 0 -2.40 0ZM271.1 278.0a0.85 0.85 0 1 0 1.70 0a0.85 0.85 0 1 0 -1.70 0Z"/><path d="M238.1 245.5L239.3 245.5L241.0 245.4L243.1 245.4L245.3 245.3L247.7 245.3L250.0 245.2L252.6 245.3L255.6 245.3L258.7 245.4L261.7 245.4L264.2 245.5L266.0 245.5L266.0 243.5L264.3 243.4L261.7 243.3L258.8 243.1L255.7 242.9L252.6 242.8L250.0 242.8L247.6 242.8L245.2 242.9L242.9 243.1L240.9 243.3L239.2 243.4L237.9 243.5Z"/><path d="M237.0 244.5a1.00 1.00 0 1 0 2.00 0a1.00 1.00 0 1 0 -2.00 0ZM265.0 244.5a1.00 1.00 0 1 0 2.00 0a1.00 1.00 0 1 0 -2.00 0Z"/><path d="M283.5 262.6L283.0 262.8L282.1 263.0L281.1 263.3L280.0 263.7L278.8 264.2L277.6 264.9L276.4 265.7L275.3 266.7L274.1 267.7L272.9 268.8L271.9 270.1L270.9 271.5L270.1 272.9L269.4 274.4L268.8 276.0L268.3 277.7L268.0 279.5L268.0 281.4L268.5 283.3L269.2 284.9L270.1 286.3L271.2 287.5L272.3 288.6L273.5 289.4L274.7 290.2L276.0 290.7L277.5 291.1L278.9 291.3L280.4 291.3L281.8 291.1L283.2 290.6L284.4 289.9L285.5 289.0L286.6 288.0L287.6 286.9L288.5 285.8L289.3 284.6L290.0 283.2L290.7 281.8L291.3 280.3L291.8 278.8L292.3 277.3L292.7 275.7L293.1 274.0L293.5 272.3L293.7 270.5L293.9 268.7L293.8 267.0L293.7 265.2L293.4 263.3L293.0 261.5L292.5 259.7L291.9 258.0L291.2 256.6L290.5 255.3L289.5 254.2L288.5 253.3L287.5 252.5L286.3 252.0L285.1 251.7L283.8 251.7L282.6 252.0L281.3 252.5L280.1 253.2L278.9 254.0L277.9 254.9L277.0 256.0L276.1 257.2L275.3 258.6L274.6 260.0L274.1 261.4L273.7 262.8L273.5 264.2L273.5 265.7L273.7 267.1L273.9 268.3L274.1 269.4L274.2 270.1L275.8 269.9L275.7 269.1L275.5 268.1L275.3 266.9L275.2 265.6L275.2 264.3L275.3 263.2L275.7 262.0L276.2 260.7L276.8 259.4L277.5 258.1L278.3 257.0L279.1 256.1L280.0 255.3L281.0 254.6L282.0 254.0L283.1 253.6L284.1 253.4L284.9 253.3L285.7 253.6L286.6 254.0L287.5 254.6L288.3 255.4L289.1 256.3L289.8 257.4L290.4 258.7L290.9 260.2L291.4 261.9L291.7 263.6L292.0 265.4L292.2 267.0L292.2 268.7L292.1 270.3L291.8 272.0L291.5 273.6L291.1 275.2L290.7 276.7L290.2 278.2L289.6 279.6L288.9 280.9L288.1 282.2L287.4 283.3L286.5 284.2L285.7 285.0L284.7 285.7L283.7 286.3L282.7 286.7L281.9 286.9L281.2 286.9L280.6 286.8L279.9 286.5L279.2 286.1L278.6 285.6L278.0 285.1L277.5 284.6L277.1 283.9L276.7 283.2L276.4 282.4L276.1 281.7L276.0 281.1L276.0 280.6L275.9 280.0L276.0 279.1L276.2 278.0L276.4 276.9L276.7 275.6L277.1 274.5L277.5 273.5L277.9 272.3L278.5 271.2L279.2 270.1L279.8 269.0L280.4 268.1L281.0 267.3L281.7 266.6L282.5 265.9L283.3 265.3L284.0 264.8L284.5 264.4Z"/><path d="M283.0 263.5a1.00 1.00 0 1 0 2.00 0a1.00 1.00 0 1 0 -2.00 0ZM274.1 270.0a0.85 0.85 0 1 0 1.70 0a0.85 0.85 0 1 0 -1.70 0Z"/><path d="M276.5 272.7L277.2 273.2L278.2 274.1L279.5 275.0L280.8 276.1L282.3 277.0L283.6 277.8L285.0 278.3L286.4 278.8L287.8 279.3L289.2 279.6L290.6 279.8L292.0 279.8L293.3 279.8L294.6 279.7L295.9 279.4L297.2 279.0L298.4 278.4L299.5 277.7L300.6 276.7L301.6 275.6L302.5 274.4L303.3 273.0L304.1 271.7L304.8 270.4L305.4 268.9L305.9 267.4L306.4 265.8L306.8 264.3L307.1 263.1L307.3 262.2L305.7 261.8L305.4 262.7L305.1 263.9L304.7 265.3L304.3 266.9L303.8 268.3L303.2 269.6L302.6 270.9L301.9 272.2L301.1 273.4L300.2 274.5L299.4 275.5L298.5 276.3L297.6 276.9L296.5 277.4L295.5 277.7L294.3 278.0L293.2 278.1L292.0 278.2L290.8 278.1L289.5 277.9L288.2 277.6L286.9 277.2L285.6 276.8L284.4 276.2L283.1 275.6L281.8 274.7L280.5 273.7L279.3 272.7L278.3 271.9L277.5 271.3Z"/><path d="M276.1 272.0a0.85 0.85 0 1 0 1.70 0a0.85 0.85 0 1 0 -1.70 0ZM305.6 262.0a0.85 0.85 0 1 0 1.70 0a0.85 0.85 0 1 0 -1.70 0Z"/><path d="M303.3 259.0L303.1 260.1L302.9 261.5L302.6 263.2L302.2 265.3L302.0 267.5L301.7 270.0L301.6 272.9L301.4 276.1L301.3 279.6L301.3 283.1L301.2 286.6L301.2 289.9L301.2 293.1L301.2 296.2L301.3 299.3L301.4 302.3L301.5 305.1L301.5 307.7L301.6 310.2L301.6 312.6L301.7 314.9L301.7 317.0L301.7 318.8L301.7 320.3L301.6 321.3L301.4 322.2L301.2 323.0L300.9 323.7L300.5 324.4L300.2 325.0L302.8 327.0L303.2 326.7L303.8 326.3L304.6 325.6L305.6 324.7L306.5 323.4L307.3 321.7L308.0 319.9L308.6 317.9L309.1 315.7L309.6 313.4L310.1 310.9L310.5 308.3L310.8 305.5L311.1 302.6L311.4 299.6L311.6 296.4L311.7 293.3L311.8 290.1L311.8 286.7L311.8 283.1L311.7 279.5L311.6 276.1L311.4 272.8L311.3 270.0L311.0 267.5L310.8 265.3L310.4 263.2L310.1 261.5L309.9 260.1L309.7 259.0Z"/><path d="M303.3 259.0a3.18 3.18 0 1 0 6.36 0a3.18 3.18 0 1 0 -6.36 0ZM299.9 326.0a1.59 1.59 0 1 0 3.18 0a1.59 1.59 0 1 0 -3.18 0Z"/><path d="M301.1 325.7L300.7 324.6L300.2 323.1L299.7 321.4L299.1 319.6L298.6 317.7L298.3 315.9L298.2 314.2L298.2 312.3L298.2 310.5L298.4 308.6L298.6 306.8L298.8 305.2L299.2 303.5L299.7 301.8L300.3 300.1L300.9 298.6L301.4 297.3L301.8 296.3L300.2 295.7L299.9 296.7L299.3 298.0L298.7 299.5L298.1 301.3L297.6 303.1L297.2 304.8L296.9 306.6L296.7 308.5L296.6 310.4L296.5 312.3L296.5 314.2L296.7 316.1L296.9 318.0L297.3 320.0L297.8 322.0L298.3 323.7L298.7 325.2L298.9 326.3Z"/><path d="M298.9 326.0a1.10 1.10 0 1 0 2.20 0a1.10 1.10 0 1 0 -2.20 0ZM300.1 296.0a0.85 0.85 0 1 0 1.70 0a0.85 0.85 0 1 0 -1.70 0Z"/><path d="M309.7 267.5L310.2 266.8L310.9 265.9L311.8 264.7L312.7 263.6L313.7 262.5L314.6 261.6L315.4 260.9L316.3 260.3L317.3 259.7L318.2 259.2L319.2 258.8L320.3 258.4L321.6 258.1L322.9 257.8L324.3 257.6L325.6 257.5L326.8 257.6L327.7 257.8L328.5 258.3L329.3 258.8L329.9 259.5L330.4 260.2L330.8 261.0L331.1 261.8L331.4 262.8L331.7 264.1L331.9 265.5L332.1 267.1L332.2 268.6L332.3 270.0L332.2 271.5L332.1 273.1L331.9 274.7L331.5 276.4L331.2 277.9L330.7 279.3L330.1 280.6L329.3 282.0L328.4 283.3L327.4 284.6L326.4 285.9L325.4 286.9L324.5 287.8L323.5 288.5L322.5 289.2L321.6 289.7L320.7 290.1L319.9 290.4L319.2 290.5L318.5 290.5L317.8 290.3L317.2 290.0L316.7 289.7L316.5 289.6L316.5 289.5L316.5 289.0L316.8 288.3L317.2 287.6L317.5 286.9L317.8 286.4L316.2 285.6L316.0 286.0L315.6 286.7L315.1 287.5L314.7 288.3L314.4 289.3L314.5 290.4L315.0 291.3L315.8 292.0L316.7 292.6L317.7 293.1L318.9 293.4L320.1 293.6L321.4 293.5L322.7 293.4L324.1 293.1L325.6 292.6L327.1 291.9L328.6 291.1L330.1 290.1L331.6 289.0L333.2 287.7L334.7 286.2L336.1 284.5L337.3 282.7L338.3 280.7L339.2 278.7L339.8 276.5L340.3 274.3L340.6 272.1L340.7 270.0L340.6 267.8L340.2 265.7L339.6 263.6L338.9 261.6L338.0 259.8L336.9 258.2L335.7 256.9L334.3 255.8L332.8 255.0L331.3 254.6L329.8 254.3L328.3 254.2L326.7 254.2L325.2 254.5L323.7 255.0L322.3 255.5L320.9 256.0L319.7 256.6L318.5 257.1L317.4 257.6L316.4 258.2L315.4 258.9L314.4 259.6L313.4 260.4L312.4 261.3L311.4 262.5L310.5 263.7L309.6 264.8L308.9 265.8L308.3 266.5Z"/><path d="M308.1 267.0a0.85 0.85 0 1 0 1.70 0a0.85 0.85 0 1 0 -1.70 0ZM316.1 286.0a0.85 0.85 0 1 0 1.70 0a0.85 0.85 0 1 0 -1.70 0Z"/><path d="M333.4 284.8L334.2 284.3L335.3 283.8L336.6 283.1L338.0 282.4L339.3 281.5L340.5 280.7L341.6 279.7L342.5 278.7L343.3 277.7L344.1 276.7L344.9 275.6L345.7 274.5L346.5 273.3L347.4 271.9L348.3 270.6L349.1 269.3L349.7 268.2L350.2 267.5L348.8 266.5L348.3 267.3L347.6 268.4L346.8 269.7L346.0 271.0L345.1 272.3L344.3 273.5L343.5 274.6L342.8 275.6L342.0 276.7L341.2 277.6L340.4 278.5L339.5 279.3L338.4 280.1L337.1 280.9L335.8 281.6L334.5 282.3L333.4 282.8L332.6 283.2Z"/><path d="M332.1 284.0a0.85 0.85 0 1 0 1.70 0a0.85 0.85 0 1 0 -1.70 0ZM348.6 267.0a0.85 0.85 0 1 0 1.70 0a0.85 0.85 0 1 0 -1.70 0Z"/><path d="M49.2 377.3L48.8 376.8L48.3 376.0L47.6 375.0L46.7 374.0L45.6 373.1L44.3 372.4L42.9 372.2L41.5 372.3L40.0 372.5L38.6 373.0L37.1 373.7L35.7 374.5L34.4 375.7L33.2 377.0L32.0 378.4L31.0 380.0L30.0 381.7L29.2 383.4L28.6 385.1L28.1 386.9L27.8 388.9L27.6 390.8L27.6 392.8L27.9 394.7L28.4 396.6L29.3 398.3L30.3 399.9L31.5 401.4L32.7 402.6L34.1 403.7L35.6 404.6L37.2 405.4L39.0 405.9L40.7 406.3L42.4 406.5L44.2 406.3L45.9 405.8L47.5 404.9L49.0 403.9L50.3 402.9L51.3 402.0L52.1 401.4L50.9 399.6L50.0 400.0L48.8 400.7L47.5 401.5L46.1 402.2L44.8 402.6L43.8 402.7L42.9 402.5L41.8 402.1L40.7 401.5L39.6 400.8L38.6 400.0L37.9 399.3L37.2 398.4L36.6 397.5L36.1 396.4L35.7 395.3L35.3 394.2L35.1 393.3L35.0 392.2L35.0 391.0L35.1 389.7L35.2 388.3L35.5 386.9L35.8 385.6L36.1 384.4L36.7 383.0L37.3 381.7L38.0 380.4L38.6 379.3L39.3 378.5L39.9 377.7L40.7 377.1L41.5 376.5L42.4 376.0L43.1 375.7L43.7 375.6L44.2 375.6L44.9 376.0L45.8 376.7L46.5 377.5L47.2 378.2L47.8 378.7Z"/><path d="M47.5 378.0a1.00 1.00 0 1 0 2.00 0a1.00 1.00 0 1 0 -2.00 0ZM50.4 400.5a1.10 1.10 0 1 0 2.20 0a1.10 1.10 0 1 0 -2.20 0Z"/><path d="M47.7 377.6L47.4 378.4L47.0 379.4L46.5 380.5L45.9 381.8L45.2 382.9L44.4 383.9L43.3 384.9L41.9 385.9L40.3 386.9L38.8 387.9L37.5 388.7L36.5 389.3L37.5 390.7L38.4 390.1L39.7 389.3L41.2 388.4L42.9 387.3L44.4 386.2L45.6 385.1L46.6 383.9L47.4 382.6L48.0 381.3L48.5 380.1L49.0 379.1L49.3 378.4Z"/><path d="M47.6 378.0a0.85 0.85 0 1 0 1.70 0a0.85 0.85 0 1 0 -1.70 0ZM36.1 390.0a0.85 0.85 0 1 0 1.70 0a0.85 0.85 0 1 0 -1.70 0Z"/><path d="M51.7 401.5L52.3 400.6L53.0 399.4L54.0 398.0L54.9 396.4L55.9 394.9L56.7 393.4L57.5 392.0L58.2 390.6L58.9 389.2L59.5 387.9L60.2 386.6L60.8 385.4L61.4 384.2L61.9 383.0L62.5 381.9L63.0 380.9L63.4 380.0L63.8 379.4L62.2 378.6L61.9 379.2L61.5 380.1L61.0 381.1L60.4 382.2L59.8 383.4L59.2 384.6L58.6 385.8L58.0 387.2L57.4 388.5L56.7 389.9L56.0 391.2L55.3 392.6L54.4 394.0L53.5 395.5L52.5 397.0L51.6 398.5L50.8 399.7L50.3 400.5Z"/><path d="M50.1 401.0a0.85 0.85 0 1 0 1.70 0a0.85 0.85 0 1 0 -1.70 0ZM62.1 379.0a0.85 0.85 0 1 0 1.70 0a0.85 0.85 0 1 0 -1.70 0Z"/><path d="M64.9 377.9L65.6 377.3L66.6 376.5L67.7 375.6L68.8 375.0L69.4 374.9L69.2 375.1L68.8 375.3L69.0 375.9L69.4 376.9L70.0 378.2L70.6 379.7L71.4 381.2L72.2 382.8L73.0 384.6L74.0 386.6L75.0 388.7L76.0 390.7L77.0 392.5L78.0 394.2L78.9 395.9L79.9 397.5L81.0 399.1L82.1 400.6L83.1 401.9L84.2 403.0L85.3 403.9L86.4 404.8L87.7 405.4L89.0 405.8L90.5 405.9L91.9 405.3L92.9 404.5L93.7 403.6L94.4 402.6L95.0 401.5L95.7 400.5L96.4 399.4L97.1 398.3L97.8 397.1L98.5 395.8L99.1 394.6L99.8 393.4L100.3 392.2L100.9 391.1L101.4 389.9L101.9 388.7L102.4 387.5L102.8 386.3L103.2 384.9L103.6 383.5L104.0 382.1L104.3 380.7L104.6 379.4L104.8 378.2L105.1 377.0L105.3 375.8L105.5 374.6L105.6 373.6L105.7 372.8L105.8 372.1L104.2 371.9L104.1 372.5L103.9 373.4L103.8 374.4L103.6 375.5L103.4 376.7L103.2 377.8L102.9 379.0L102.6 380.4L102.3 381.7L102.0 383.1L101.6 384.5L101.2 385.7L100.8 386.9L100.3 388.1L99.8 389.2L99.3 390.3L98.8 391.5L98.2 392.6L97.6 393.8L97.0 395.1L96.4 396.3L95.7 397.5L95.0 398.6L94.3 399.5L93.5 400.3L92.7 401.1L91.9 401.8L91.2 402.2L90.6 402.3L90.5 402.1L90.5 401.9L90.4 401.5L90.1 400.9L89.8 400.1L89.3 399.1L88.9 398.1L88.4 396.9L87.8 395.5L87.3 393.9L86.6 392.1L85.8 390.3L85.0 388.5L84.1 386.6L83.1 384.6L82.1 382.5L81.0 380.5L79.8 378.5L78.6 376.8L77.5 375.3L76.3 373.9L75.0 372.6L73.6 371.4L72.0 370.4L69.8 369.9L67.6 370.5L66.1 371.7L65.1 373.0L64.2 374.4L63.6 375.4L63.1 376.1Z"/><path d="M62.8 377.0a1.25 1.25 0 1 0 2.50 0a1.25 1.25 0 1 0 -2.50 0ZM104.2 372.0a0.85 0.85 0 1 0 1.70 0a0.85 0.85 0 1 0 -1.70 0Z"/><path d="M88.7 366.0L87.1 368.4L84.9 371.8L82.3 375.9L79.5 380.2L76.7 384.5L74.2 388.5L71.7 392.4L69.1 396.7L66.5 400.9L64.2 404.8L62.1 408.1L60.7 410.5L62.3 411.5L63.8 409.1L65.8 405.8L68.2 401.9L70.7 397.7L73.3 393.5L75.8 389.5L78.3 385.5L81.1 381.2L83.9 376.9L86.5 372.9L88.7 369.5L90.3 367.0Z"/><path d="M88.5 366.5a0.95 0.95 0 1 0 1.90 0a0.95 0.95 0 1 0 -1.90 0ZM60.5 411.0a0.95 0.95 0 1 0 1.90 0a0.95 0.95 0 1 0 -1.90 0Z"/><path d="M102.3 371.2L102.2 372.6L102.2 374.6L102.1 376.9L102.0 379.5L102.0 382.3L102.0 385.1L102.0 388.1L102.0 391.5L102.1 394.9L102.2 398.4L102.2 401.8L102.3 404.9L102.3 408.0L102.2 410.9L102.2 413.8L102.1 416.6L102.1 419.2L102.0 421.6L101.9 423.7L101.9 425.7L101.8 427.6L101.7 429.2L101.6 430.7L101.5 432.0L101.4 432.9L101.3 433.7L101.1 434.5L100.8 435.2L100.5 435.9L100.3 436.5L102.7 438.5L103.2 438.3L103.8 437.9L104.7 437.4L105.6 436.6L106.6 435.4L107.5 434.0L108.2 432.5L108.9 430.8L109.5 429.0L110.0 427.0L110.5 424.8L111.0 422.4L111.3 419.9L111.6 417.2L111.9 414.3L112.1 411.3L112.2 408.2L112.3 405.1L112.4 401.8L112.4 398.3L112.3 394.7L112.3 391.2L112.2 387.9L112.0 384.9L111.9 382.0L111.6 379.2L111.4 376.6L111.1 374.2L110.9 372.3L110.7 370.8Z"/><path d="M102.3 371.0a4.24 4.24 0 1 0 8.48 0a4.24 4.24 0 1 0 -8.48 0ZM99.9 437.5a1.59 1.59 0 1 0 3.18 0a1.59 1.59 0 1 0 -3.18 0Z"/><path d="M101.0 436.8L100.7 435.5L100.3 433.7L99.9 431.6L99.4 429.4L99.1 427.1L98.8 424.9L98.8 422.8L98.7 420.6L98.8 418.3L98.9 416.1L99.1 414.0L99.3 412.1L99.7 410.4L100.2 408.6L100.8 407.0L101.4 405.5L101.9 404.2L102.3 403.3L100.7 402.7L100.4 403.6L99.8 404.9L99.2 406.4L98.6 408.1L98.1 410.0L97.7 411.9L97.4 413.9L97.2 416.0L97.1 418.3L97.1 420.6L97.1 422.9L97.2 425.1L97.4 427.3L97.7 429.7L98.1 432.0L98.5 434.1L98.8 435.9L99.0 437.2Z"/><path d="M99.0 437.0a1.00 1.00 0 1 0 2.00 0a1.00 1.00 0 1 0 -2.00 0ZM100.7 403.0a0.85 0.85 0 1 0 1.70 0a0.85 0.85 0 1 0 -1.70 0Z"/><path d="M112.7 381.5L113.1 380.8L113.7 379.8L114.4 378.7L115.1 377.5L115.9 376.5L116.6 375.6L117.4 374.8L118.1 374.1L118.9 373.5L119.7 372.9L120.5 372.4L121.5 372.0L122.6 371.6L123.8 371.2L125.1 370.9L126.3 370.7L127.5 370.7L128.4 370.9L129.3 371.1L130.1 371.5L130.7 372.0L131.2 372.6L131.6 373.2L131.9 373.9L132.4 374.9L132.8 376.3L133.2 377.8L133.5 379.3L133.7 380.8L133.8 382.2L133.7 383.7L133.6 385.5L133.4 387.3L133.1 389.2L132.7 390.9L132.2 392.3L131.6 393.5L130.9 394.8L129.9 396.1L128.9 397.4L127.7 398.5L126.7 399.5L125.8 400.3L124.8 400.9L123.8 401.5L122.8 401.9L121.9 402.2L121.2 402.3L120.6 402.2L120.0 401.9L119.4 401.5L118.9 400.9L118.5 400.3L118.3 399.9L118.3 399.5L118.6 398.9L119.0 398.2L119.5 397.5L119.9 396.9L120.2 396.5L118.8 395.5L118.5 396.0L118.1 396.6L117.6 397.3L117.1 398.2L116.7 399.1L116.7 400.1L116.9 401.0L117.4 401.9L118.0 402.8L118.7 403.6L119.7 404.3L120.8 404.7L122.0 404.9L123.3 405.0L124.7 404.9L126.2 404.6L127.8 404.2L129.3 403.5L130.8 402.7L132.4 401.8L134.1 400.6L135.8 399.2L137.4 397.6L138.8 395.7L139.9 393.6L140.8 391.4L141.5 389.0L142.0 386.6L142.2 384.2L142.2 381.8L141.9 379.4L141.2 377.2L140.4 375.1L139.4 373.2L138.2 371.5L137.1 370.1L135.7 368.9L134.3 368.0L132.8 367.5L131.3 367.2L130.0 367.1L128.6 367.1L127.2 367.3L125.7 367.7L124.3 368.2L122.9 368.8L121.7 369.4L120.5 370.0L119.5 370.6L118.6 371.3L117.7 372.0L116.9 372.8L116.1 373.6L115.4 374.4L114.6 375.5L113.8 376.6L113.0 377.8L112.3 378.9L111.7 379.9L111.3 380.5Z"/><path d="M111.2 381.0a0.85 0.85 0 1 0 1.70 0a0.85 0.85 0 1 0 -1.70 0ZM118.7 396.0a0.85 0.85 0 1 0 1.70 0a0.85 0.85 0 1 0 -1.70 0Z"/><path d="M137.5 392.7L138.1 392.3L139.0 391.7L140.1 391.0L141.2 390.2L142.4 389.4L143.5 388.7L144.5 388.1L145.5 387.4L146.5 386.8L147.5 386.1L148.6 385.4L149.5 384.7L150.5 383.8L151.5 382.8L152.5 381.8L153.4 380.9L154.1 380.1L154.6 379.6L153.4 378.4L152.8 379.0L152.1 379.8L151.3 380.7L150.3 381.6L149.4 382.5L148.5 383.3L147.6 384.0L146.6 384.7L145.6 385.3L144.6 386.0L143.6 386.6L142.5 387.3L141.5 388.0L140.3 388.8L139.2 389.5L138.1 390.3L137.2 390.9L136.5 391.3Z"/><path d="M136.2 392.0a0.85 0.85 0 1 0 1.70 0a0.85 0.85 0 1 0 -1.70 0ZM153.2 379.0a0.85 0.85 0 1 0 1.70 0a0.85 0.85 0 1 0 -1.70 0Z"/><path d="M160.6 365.6L161.6 364.5L163.0 363.1L164.6 361.4L166.4 359.5L168.1 357.5L169.7 355.5L171.1 353.5L172.6 351.4L174.0 349.1L175.4 346.9L176.7 344.6L177.8 342.4L178.8 340.1L179.7 337.8L180.5 335.6L181.2 333.3L181.7 331.1L182.0 329.0L182.0 327.0L181.8 324.9L181.4 322.9L180.8 321.1L180.0 319.5L178.9 318.2L177.4 317.3L175.6 316.9L173.6 316.8L171.6 317.3L169.5 318.2L167.5 319.7L165.6 321.6L163.8 323.9L162.1 326.5L160.5 329.3L158.9 332.3L157.5 335.3L156.3 338.5L155.1 341.9L154.1 345.4L153.2 349.0L152.4 352.6L151.8 356.2L151.2 359.8L150.8 363.5L150.5 367.1L150.3 370.8L150.2 374.4L150.2 378.0L150.3 381.6L150.5 385.3L150.8 388.9L151.2 392.4L151.7 395.7L152.3 398.8L153.0 401.6L153.7 404.2L154.6 406.6L155.5 408.8L156.4 410.8L157.4 412.6L158.4 414.3L159.5 415.9L160.6 417.5L161.9 418.8L163.2 420.0L164.6 420.9L166.0 421.5L167.4 421.9L168.9 421.9L170.4 421.6L171.7 420.9L172.9 419.9L173.9 418.4L174.7 416.7L175.5 414.7L176.3 412.6L177.1 410.4L177.8 408.3L178.5 406.2L179.3 404.0L180.0 401.7L180.7 399.4L181.3 397.2L181.8 395.2L182.3 393.2L182.7 391.2L183.1 389.3L183.4 387.6L183.6 386.2L183.8 385.2L182.2 384.8L182.0 385.9L181.7 387.3L181.4 389.0L181.1 390.9L180.6 392.9L180.2 394.8L179.6 396.8L179.0 399.0L178.4 401.2L177.7 403.5L177.0 405.6L176.2 407.7L175.4 409.8L174.6 411.9L173.7 413.9L172.8 415.8L171.9 417.2L171.1 418.1L170.4 418.5L169.7 418.6L169.1 418.4L168.5 418.1L167.9 417.7L167.4 417.1L167.0 416.4L166.6 415.4L166.1 414.2L165.6 412.7L165.2 411.1L164.6 409.4L164.1 407.6L163.5 405.8L163.0 403.9L162.5 401.8L162.1 399.6L161.7 397.2L161.4 394.5L161.2 391.4L161.0 388.1L160.9 384.7L160.8 381.3L160.8 378.0L160.9 374.7L161.0 371.3L161.2 367.9L161.5 364.5L161.8 361.1L162.2 357.8L162.8 354.5L163.4 351.2L164.1 347.9L164.8 344.6L165.6 341.5L166.5 338.7L167.4 335.8L168.4 333.0L169.5 330.4L170.6 327.9L171.6 325.9L172.5 324.3L173.3 323.2L174.1 322.3L175.0 321.6L175.8 321.1L176.6 320.9L177.1 320.8L177.7 321.2L178.5 322.2L179.1 323.6L179.6 325.3L179.9 327.2L180.0 329.0L179.8 330.8L179.4 332.8L178.8 335.0L178.1 337.2L177.2 339.5L176.2 341.6L175.2 343.8L173.9 346.0L172.6 348.2L171.2 350.4L169.7 352.5L168.3 354.5L166.8 356.4L165.1 358.4L163.4 360.2L161.8 361.9L160.4 363.4L159.4 364.4Z"/><path d="M159.2 365.0a0.85 0.85 0 1 0 1.70 0a0.85 0.85 0 1 0 -1.70 0ZM182.2 385.0a0.85 0.85 0 1 0 1.70 0a0.85 0.85 0 1 0 -1.70 0Z"/><path d="M189.5 371.1L189.0 371.3L188.2 371.5L187.3 371.8L186.2 372.2L185.0 372.8L183.9 373.6L182.9 374.5L181.9 375.6L180.9 376.7L180.0 378.1L179.1 379.5L178.4 381.1L177.9 382.8L177.5 384.5L177.2 386.3L177.1 388.1L177.1 390.0L177.4 391.7L177.8 393.4L178.5 394.9L179.4 396.4L180.4 397.7L181.4 398.8L182.6 399.7L183.9 400.4L185.3 400.9L186.7 401.1L188.1 401.0L189.5 400.8L190.7 400.2L191.8 399.4L192.8 398.5L193.8 397.4L194.6 396.2L195.4 394.9L196.0 393.5L196.5 391.9L196.9 390.3L197.3 388.6L197.5 386.8L197.7 384.9L197.8 383.1L197.9 381.1L198.0 378.9L198.0 376.7L197.9 374.6L197.7 372.5L197.3 370.8L196.8 369.2L196.1 367.8L195.3 366.6L194.4 365.5L193.3 364.7L192.2 364.2L191.0 364.0L189.8 364.2L188.6 364.7L187.4 365.3L186.3 366.1L185.4 366.9L184.6 368.0L183.9 369.2L183.3 370.6L182.9 371.9L182.5 373.0L182.2 373.7L183.8 374.3L184.1 373.5L184.5 372.5L184.9 371.2L185.4 370.0L186.0 368.9L186.6 368.1L187.4 367.4L188.3 366.8L189.3 366.2L190.2 365.9L191.1 365.7L191.8 365.8L192.4 366.2L193.2 366.8L193.9 367.6L194.6 368.7L195.2 369.9L195.7 371.2L196.0 372.8L196.2 374.7L196.3 376.8L196.3 378.9L196.3 381.0L196.2 382.9L196.0 384.7L195.7 386.5L195.4 388.2L195.0 389.8L194.6 391.3L194.0 392.5L193.3 393.6L192.5 394.6L191.7 395.5L190.8 396.1L190.0 396.6L189.3 396.8L188.7 396.8L188.2 396.7L187.6 396.4L187.1 396.1L186.7 395.7L186.4 395.3L186.1 394.7L185.7 394.0L185.4 393.1L185.1 392.2L184.8 391.2L184.6 390.3L184.5 389.3L184.4 388.1L184.3 386.7L184.3 385.4L184.4 384.0L184.6 382.9L184.8 381.8L185.1 380.7L185.6 379.5L186.1 378.4L186.6 377.3L187.1 376.4L187.5 375.7L188.1 375.0L188.7 374.4L189.4 373.8L190.0 373.3L190.5 372.9Z"/><path d="M189.0 372.0a1.00 1.00 0 1 0 2.00 0a1.00 1.00 0 1 0 -2.00 0ZM182.2 374.0a0.85 0.85 0 1 0 1.70 0a0.85 0.85 0 1 0 -1.70 0Z"/><path d="M184.4 381.6L185.0 382.2L185.9 383.0L186.9 384.0L188.1 385.0L189.3 386.0L190.6 386.8L191.9 387.3L193.3 387.9L194.7 388.3L196.2 388.7L197.6 388.8L199.1 388.8L200.4 388.7L201.8 388.3L203.1 387.8L204.3 387.2L205.5 386.5L206.6 385.6L207.5 384.6L208.3 383.5L209.1 382.2L209.7 380.9L210.3 379.6L210.8 378.3L211.3 377.0L211.7 375.6L212.0 374.2L212.4 372.8L212.6 371.4L212.8 370.1L213.1 368.8L213.3 367.3L213.4 365.9L213.5 364.6L213.5 363.5L213.2 362.5L212.0 362.0L211.2 362.5L210.5 363.1L209.8 363.9L209.2 364.8L208.7 365.7L208.4 366.6L208.2 367.7L208.0 368.8L208.0 370.0L208.0 371.1L208.2 372.2L208.5 373.2L208.8 374.3L209.3 375.3L210.0 376.3L210.7 377.2L211.7 377.8L212.8 378.0L214.0 377.9L215.1 377.7L216.3 377.3L217.3 377.0L218.2 376.8L219.0 376.7L219.9 376.6L220.6 376.5L221.3 376.4L221.9 376.3L222.3 376.2L221.7 373.8L221.3 373.9L220.7 374.2L220.1 374.4L219.4 374.7L218.6 374.9L217.8 375.2L216.9 375.4L215.8 375.8L214.7 376.1L213.7 376.3L212.9 376.3L212.3 376.2L211.8 375.9L211.3 375.3L210.8 374.5L210.4 373.6L210.1 372.7L209.8 371.8L209.7 370.9L209.7 370.0L209.7 369.0L209.9 368.0L210.1 367.1L210.3 366.3L210.6 365.6L211.1 364.9L211.7 364.3L212.2 363.8L212.3 363.7L211.8 363.5L211.8 363.7L211.8 364.5L211.7 365.7L211.6 367.1L211.4 368.5L211.2 369.9L210.9 371.1L210.7 372.5L210.4 373.8L210.1 375.1L209.7 376.4L209.2 377.7L208.7 378.9L208.2 380.2L207.6 381.4L206.9 382.5L206.2 383.5L205.4 384.4L204.5 385.1L203.5 385.7L202.4 386.3L201.3 386.7L200.1 387.0L198.9 387.2L197.8 387.1L196.5 387.0L195.2 386.7L193.8 386.3L192.6 385.8L191.4 385.2L190.3 384.6L189.2 383.7L188.1 382.7L187.1 381.8L186.2 381.0L185.6 380.4Z"/><path d="M184.2 381.0a0.85 0.85 0 1 0 1.70 0a0.85 0.85 0 1 0 -1.70 0ZM220.8 375.0a1.25 1.25 0 1 0 2.50 0a1.25 1.25 0 1 0 -2.50 0Z"/><path d="M220.8 375.8L220.8 377.0L220.6 378.7L220.5 380.7L220.4 382.9L220.3 385.1L220.2 387.3L220.3 389.5L220.4 392.0L220.5 394.6L220.7 397.1L220.8 399.7L221.0 402.1L221.2 404.4L221.4 406.7L221.6 409.0L221.8 411.2L222.0 413.2L222.3 415.1L222.7 416.7L223.0 418.1L223.5 419.3L223.9 420.3L224.2 421.0L224.4 421.7L227.6 421.3L227.7 420.7L227.9 419.8L228.0 418.8L228.3 417.7L228.5 416.4L228.7 414.9L228.9 413.2L229.2 411.2L229.4 409.1L229.7 406.7L229.9 404.3L230.0 401.9L230.1 399.5L230.1 396.9L230.1 394.3L230.1 391.6L230.0 389.1L229.8 386.7L229.4 384.4L229.0 382.1L228.4 379.9L227.9 378.0L227.5 376.4L227.2 375.2Z"/><path d="M220.8 375.5a3.18 3.18 0 1 0 6.36 0a3.18 3.18 0 1 0 -6.36 0ZM224.4 421.5a1.59 1.59 0 1 0 3.18 0a1.59 1.59 0 1 0 -3.18 0Z"/><path d="M228.1 422.4L228.4 421.6L228.7 420.5L229.1 419.2L229.6 417.7L230.2 416.1L230.8 414.3L231.5 412.3L232.3 410.0L233.2 407.5L234.1 405.0L235.0 402.6L235.8 400.3L236.5 398.1L237.2 396.1L237.9 394.1L238.6 392.1L239.2 390.2L239.8 388.2L240.4 386.2L241.0 384.1L241.6 382.0L242.1 380.0L242.5 378.4L242.8 377.2L241.2 376.8L240.9 378.0L240.4 379.6L239.9 381.5L239.4 383.6L238.8 385.7L238.2 387.8L237.6 389.7L237.0 391.6L236.3 393.5L235.6 395.5L234.9 397.6L234.2 399.7L233.4 402.0L232.5 404.5L231.7 407.0L230.8 409.4L229.9 411.7L229.2 413.7L228.5 415.5L227.8 417.1L227.2 418.5L226.7 419.8L226.2 420.8L225.9 421.6Z"/><path d="M225.8 422.0a1.20 1.20 0 1 0 2.40 0a1.20 1.20 0 1 0 -2.40 0ZM241.2 377.0a0.85 0.85 0 1 0 1.70 0a0.85 0.85 0 1 0 -1.70 0Z"/><path d="M242.1 373.0L241.9 374.0L241.6 375.4L241.3 377.1L241.0 379.1L240.8 381.2L240.8 383.2L240.8 385.4L241.0 387.7L241.2 390.2L241.5 392.6L241.9 394.9L242.4 396.9L242.9 398.6L243.6 400.2L244.4 401.6L245.3 402.9L246.3 404.0L247.4 405.0L248.6 405.8L249.9 406.4L251.2 406.8L252.7 407.0L254.1 406.9L255.5 406.5L256.7 405.8L257.8 404.8L258.9 403.7L259.9 402.5L260.9 401.2L261.7 400.0L262.5 398.6L263.2 397.2L263.8 395.6L264.4 394.1L264.9 392.6L265.3 391.2L265.7 389.9L266.0 388.5L266.3 387.1L266.5 385.9L266.7 384.9L266.8 384.2L265.2 383.8L265.0 384.6L264.8 385.6L264.6 386.8L264.4 388.1L264.1 389.5L263.7 390.8L263.3 392.1L262.8 393.6L262.3 395.1L261.7 396.5L261.0 397.9L260.3 399.0L259.4 400.1L258.4 401.1L257.3 402.1L256.3 402.8L255.3 403.3L254.5 403.5L254.0 403.4L253.4 403.1L252.9 402.7L252.4 402.2L252.0 401.6L251.6 401.0L251.4 400.4L251.3 399.6L251.1 398.8L251.0 397.7L250.8 396.5L250.6 395.1L250.4 393.4L250.2 391.4L249.9 389.2L249.7 386.9L249.5 384.7L249.2 382.8L249.0 380.9L248.7 379.1L248.5 377.2L248.3 375.6L248.1 374.1L247.9 373.0Z"/><path d="M242.1 373.0a2.92 2.92 0 1 0 5.83 0a2.92 2.92 0 1 0 -5.83 0ZM265.1 384.0a0.85 0.85 0 1 0 1.70 0a0.85 0.85 0 1 0 -1.70 0Z"/><path d="M263.6 370.6L263.5 371.9L263.3 373.6L263.1 375.7L262.9 377.9L262.8 380.2L262.8 382.2L262.8 384.1L262.9 386.1L263.1 388.0L263.3 389.9L263.5 391.6L263.8 393.2L264.1 394.7L264.5 396.0L264.9 397.2L265.3 398.2L265.6 399.0L265.9 399.7L270.1 399.3L270.2 398.6L270.4 397.8L270.7 396.7L270.9 395.5L271.1 394.2L271.2 392.8L271.3 391.2L271.4 389.5L271.4 387.6L271.4 385.7L271.4 383.7L271.2 381.8L271.0 379.8L270.7 377.6L270.3 375.4L270.0 373.4L269.6 371.6L269.4 370.4Z"/><path d="M263.6 370.5a2.92 2.92 0 1 0 5.83 0a2.92 2.92 0 1 0 -5.83 0ZM265.9 399.5a2.12 2.12 0 1 0 4.24 0a2.12 2.12 0 1 0 -4.24 0Z"/><path d="M269.8 384.4L270.2 383.5L270.8 382.2L271.4 380.8L272.2 379.2L273.0 377.7L273.7 376.4L274.5 375.3L275.3 374.1L276.1 373.0L277.0 371.9L277.9 371.0L278.7 370.2L279.6 369.5L280.4 368.8L281.2 368.3L282.0 368.0L282.5 367.9L282.8 368.1L283.1 368.4L283.5 368.8L283.7 369.2L283.9 369.9L284.1 370.6L284.2 371.7L284.2 373.1L284.0 375.0L283.8 377.3L283.6 379.7L283.4 382.4L283.3 385.0L283.2 387.7L283.2 390.6L283.2 393.6L283.3 396.6L283.4 399.4L283.5 402.0L283.7 404.4L284.0 406.7L284.2 408.8L284.6 410.9L284.9 412.8L285.4 414.5L286.0 416.1L286.8 417.4L287.6 418.3L288.3 419.0L288.8 419.5L289.2 419.9L291.8 418.1L291.6 417.6L291.3 416.9L291.0 416.2L290.8 415.4L290.7 414.5L290.6 413.5L290.6 412.2L290.8 410.5L291.0 408.7L291.2 406.6L291.3 404.3L291.5 402.0L291.6 399.4L291.7 396.6L291.8 393.7L291.8 390.6L291.8 387.7L291.7 385.0L291.6 382.4L291.4 379.8L291.2 377.2L290.9 374.7L290.4 372.4L289.8 370.3L289.0 368.6L288.0 367.2L286.8 366.1L285.6 365.4L284.4 365.1L283.2 364.9L281.9 365.1L280.8 365.6L279.9 366.3L279.0 367.1L278.1 367.9L277.3 368.8L276.5 369.7L275.6 370.8L274.7 371.9L273.9 373.1L273.1 374.3L272.3 375.6L271.5 376.9L270.7 378.5L269.9 380.0L269.2 381.5L268.7 382.8L268.2 383.6Z"/><path d="M268.1 384.0a0.85 0.85 0 1 0 1.70 0a0.85 0.85 0 1 0 -1.70 0ZM288.9 419.0a1.59 1.59 0 1 0 3.18 0a1.59 1.59 0 1 0 -3.18 0Z"/><path d="M290.7 419.8L291.1 419.5L291.6 419.0L292.3 418.4L293.1 417.6L293.9 416.6L294.7 415.5L295.5 414.1L296.3 412.5L297.2 410.7L298.1 408.9L298.9 407.1L299.8 405.4L300.7 403.6L301.6 401.7L302.6 399.8L303.5 398.0L304.2 396.5L304.8 395.4L303.2 394.6L302.7 395.7L301.9 397.2L301.1 399.0L300.1 400.9L299.1 402.8L298.2 404.6L297.4 406.4L296.5 408.2L295.7 410.0L294.8 411.7L294.0 413.3L293.3 414.5L292.5 415.5L291.8 416.3L291.0 416.9L290.4 417.4L289.7 417.8L289.3 418.2Z"/><path d="M288.9 419.0a1.10 1.10 0 1 0 2.20 0a1.10 1.10 0 1 0 -2.20 0ZM303.1 395.0a0.85 0.85 0 1 0 1.70 0a0.85 0.85 0 1 0 -1.70 0Z"/><path d="M320.4 371.3L319.9 370.9L319.2 370.5L318.3 369.9L317.4 369.3L316.3 368.8L315.2 368.4L314.1 368.2L313.0 368.1L311.8 368.0L310.6 368.1L309.3 368.4L308.0 368.9L306.7 369.7L305.5 370.5L304.3 371.6L303.1 372.8L302.0 374.2L301.0 375.9L300.3 377.7L299.6 379.7L299.1 381.8L298.7 384.0L298.5 386.1L298.5 388.2L298.8 390.2L299.2 392.2L299.8 394.1L300.6 395.9L301.5 397.6L302.6 399.1L303.8 400.4L305.2 401.4L306.7 402.1L308.2 402.6L309.8 402.8L311.4 402.5L312.7 401.8L313.7 400.7L314.6 399.5L315.4 398.1L316.1 396.7L316.8 395.4L317.4 394.0L317.9 392.4L318.5 390.9L318.9 389.3L319.4 387.7L319.8 386.2L320.2 384.7L320.6 383.2L321.0 381.6L321.3 380.2L321.6 379.1L321.8 378.2L320.2 377.8L320.0 378.7L319.7 379.8L319.4 381.2L319.0 382.8L318.6 384.3L318.2 385.8L317.8 387.2L317.4 388.8L316.9 390.4L316.4 391.9L315.9 393.3L315.2 394.6L314.5 395.8L313.7 397.0L312.8 398.1L311.9 398.9L311.1 399.4L310.6 399.5L310.2 399.3L309.6 398.9L309.0 398.3L308.4 397.6L307.8 396.7L307.4 395.9L307.2 395.0L306.9 393.7L306.7 392.3L306.6 390.8L306.5 389.3L306.5 387.8L306.4 386.3L306.4 384.6L306.5 382.8L306.6 381.1L306.8 379.5L307.0 378.1L307.3 376.9L307.7 375.8L308.2 374.7L308.8 373.7L309.4 372.8L310.0 372.1L310.6 371.5L311.4 371.1L312.2 370.8L313.1 370.7L314.0 370.6L314.8 370.6L315.6 370.7L316.5 371.0L317.4 371.5L318.3 372.0L319.0 372.4L319.6 372.7Z"/><path d="M319.1 372.0a0.85 0.85 0 1 0 1.70 0a0.85 0.85 0 1 0 -1.70 0ZM320.1 378.0a0.85 0.85 0 1 0 1.70 0a0.85 0.85 0 1 0 -1.70 0Z"/><path d="M316.7 371.7L317.3 372.0L318.1 372.4L318.8 372.8L319.3 373.2L319.6 373.7L319.7 374.4L319.9 375.5L320.2 377.0L320.4 378.9L320.6 381.0L320.7 383.2L320.8 385.5L320.8 387.9L320.8 390.5L320.7 393.2L320.6 396.1L320.5 399.0L320.5 401.9L320.4 404.9L320.4 407.9L320.4 410.9L320.3 413.9L320.2 416.7L320.0 419.4L319.7 422.0L319.4 424.6L319.0 427.1L318.5 429.5L318.0 431.7L317.5 433.8L317.0 435.5L316.4 437.2L315.9 438.6L315.3 440.0L314.7 441.2L314.1 442.2L313.5 443.0L312.7 443.8L311.8 444.5L310.9 445.1L310.0 445.6L309.3 446.1L310.7 448.9L311.4 448.7L312.3 448.5L313.6 448.2L315.0 447.6L316.5 446.9L317.9 445.8L319.2 444.6L320.3 443.3L321.4 441.8L322.5 440.1L323.5 438.3L324.5 436.2L325.4 434.0L326.2 431.6L327.0 429.0L327.8 426.3L328.4 423.5L329.0 420.6L329.4 417.6L329.8 414.5L330.1 411.4L330.3 408.2L330.5 405.1L330.5 402.1L330.5 399.1L330.4 396.0L330.3 393.0L330.0 390.0L329.7 387.2L329.2 384.5L328.6 382.0L328.0 379.6L327.2 377.3L326.3 375.2L325.4 373.3L324.3 371.6L322.9 370.3L321.3 369.5L319.8 369.2L318.7 369.2L317.9 369.3L317.3 369.3Z"/><path d="M315.8 370.5a1.25 1.25 0 1 0 2.50 0a1.25 1.25 0 1 0 -2.50 0ZM308.4 447.5a1.59 1.59 0 1 0 3.18 0a1.59 1.59 0 1 0 -3.18 0Z"/><path d="M311.4 446.6L310.5 446.2L309.2 445.7L307.7 445.0L306.1 444.3L304.8 443.4L303.6 442.4L302.7 441.2L301.7 439.7L300.9 438.0L300.1 436.3L299.6 434.5L299.3 432.9L299.3 431.3L299.5 429.7L299.9 428.1L300.4 426.4L301.0 424.9L301.7 423.4L302.6 422.1L303.5 420.8L304.6 419.7L305.9 418.5L307.2 417.3L308.5 416.2L310.0 415.0L311.5 413.9L313.2 412.8L314.9 411.6L316.7 410.5L318.5 409.2L320.4 407.9L322.5 406.4L324.7 404.9L326.8 403.5L328.8 402.0L330.5 400.7L332.0 399.4L333.4 398.2L334.6 397.1L335.7 395.9L336.7 394.7L337.7 393.5L338.6 392.1L339.4 390.7L340.1 389.3L340.7 387.9L341.3 386.6L341.8 385.3L342.3 384.1L342.7 382.9L343.1 381.8L343.4 380.7L343.6 379.9L343.8 379.3L342.2 378.7L342.0 379.4L341.7 380.2L341.4 381.2L341.1 382.4L340.7 383.5L340.2 384.7L339.7 385.9L339.1 387.2L338.5 388.6L337.9 389.9L337.1 391.3L336.3 392.5L335.4 393.7L334.4 394.8L333.4 395.9L332.2 397.0L330.9 398.1L329.5 399.3L327.8 400.7L325.8 402.1L323.7 403.6L321.6 405.0L319.5 406.5L317.5 407.8L315.7 409.0L313.9 410.2L312.2 411.4L310.5 412.5L309.0 413.6L307.5 414.8L306.0 416.1L304.7 417.2L303.4 418.5L302.2 419.7L301.2 421.1L300.3 422.6L299.5 424.2L298.8 425.9L298.2 427.6L297.8 429.4L297.6 431.3L297.7 433.1L298.0 434.9L298.6 436.8L299.3 438.7L300.3 440.5L301.3 442.1L302.4 443.6L303.7 444.8L305.3 445.8L306.9 446.7L308.4 447.4L309.7 448.0L310.6 448.4Z"/><path d="M310.0 447.5a1.00 1.00 0 1 0 2.00 0a1.00 1.00 0 1 0 -2.00 0ZM342.1 379.0a0.85 0.85 0 1 0 1.70 0a0.85 0.85 0 1 0 -1.70 0Z"/>
<ellipse cx="247" cy="357" rx="5.5" ry="3.6" transform="rotate(28 247 357)"/>
<path d="M87 450L133 450L144.5 462L135.5 476.5L81 477L95 463Z"/>
<path d="M144 460.4L248 461L248 464L144 464.2Z"/>
<path d="M149 462.3L154 458.8L159 462.3L154 465.8Z M169 462.5L174 459L179 462.5L174 466Z M189.5 462.5L194.5 459L199.5 462.5L194.5 466Z M209 462.3L214 458.8L219 462.3L214 465.8Z" stroke="#7b4a22" stroke-width="1.2" stroke-linejoin="round"/>
<path d="M248.5 443C258 450 270 456 280.5 461.8C268 468 252 474 238 481.3C244 475 249 469 249.5 463.5C250 456 249 449 248.5 443Z" stroke="#7b4a22" stroke-width="1.5" stroke-linejoin="round"/>
<g stroke="#7b4a22" stroke-width="2.6" stroke-linecap="round" fill="none"><path d="M232 456.5L245 462.5M241 454.5L249.5 460M232.5 468.5L245 462.8M241 470L249.5 465.5"/></g>
<g stroke="#fff" stroke-width="2.9" stroke-linecap="round" fill="none"><path d="M96 453L102 459M105.5 453L111.5 459M115 453L121 459M124 453L129.5 458.5M92.5 473L99.5 466.5M102 473L109.5 466.5M112 473L119.5 466.5M121 473L128.5 466.5M130.5 472.5L136 467"/></g>
</g>
<g fill="none" stroke="#cdcdcd" stroke-width="1.3"><rect x="10.5" y="220.2" width="339" height="261.6"/></g>
<g fill="#f4f4f4" stroke="#4a4a4a" stroke-width="1.4"><rect x="7.5" y="217.5" width="6" height="6" rx="1.5"/><rect x="177.5" y="217.5" width="6" height="6" rx="1.5"/><rect x="346.5" y="217.5" width="6" height="6" rx="1.5"/><rect x="7.5" y="348.5" width="6" height="6" rx="1.5"/><rect x="346.5" y="348.5" width="6" height="6" rx="1.5"/><rect x="7.5" y="479" width="6" height="6" rx="1.5"/><rect x="177.5" y="479" width="6" height="6" rx="1.5"/><rect x="346.5" y="479" width="6" height="6" rx="1.5"/></g>
<g stroke="#5a6070" stroke-width="1" fill="none"><path d="M180.5 346.5v3M180.5 352.5v3M176 351h3M182 351h3M178.5 351L180.5 349L182.5 351L180.5 353Z"/></g>
</svg>
</div>
<div id="paste" class="a"></div>
<div id="vtrack" class="a"></div>
<div id="status" class="a"></div>
<div class="a" style="left:0;top:671px;width:83px;height:9px;background:#4a4a4a;border-top:1px solid #1c1c1c"></div>
<span class="a" style="left:3px;top:671px;font-size:8.1px;color:#e8e8e8;font-weight:bold;letter-spacing:-0.15px">33.2M/120.9M</span>
<div class="a" style="left:83px;top:671px;width:10px;height:9px;background:#5a5a5a;border-top:1px solid #1c1c1c"></div>
<svg class="a" style="left:85px;top:673px" width="6" height="7"><path d="M1.5 0.5L5 3.5L1.5 6.5Z" fill="#e0e0e0"/></svg>
<div class="a" style="left:220px;top:673px;width:166px;height:8px;border-radius:4px;background:linear-gradient(#a0a0a0,#808080)"></div>
<div class="a" style="left:514px;top:256px;width:6.5px;height:214px;border-radius:3px;background:linear-gradient(90deg,#858585,#9a9a9a,#858585)"></div>
<div class="a" style="left:512px;top:671px;width:13px;height:9px;background:#4a4a4a"></div>
<div id="dock" class="a">
 <div class="a" style="left:0;top:9px;width:29px;height:31px;background:#535353;border-bottom:2px solid #3c3c3c"></div>
 <div class="a" style="left:0;top:41px;width:29px;height:30px;border-bottom:2px solid #3c3c3c"></div>
 <div class="a" style="left:0;top:72px;width:29px;height:31px;border-bottom:2px solid #3c3c3c"></div>
 <div class="a" style="left:0;top:104px;width:29px;height:51px;border-bottom:2px solid #3c3c3c"></div>
 <div class="a" style="left:0;top:156px;width:29px;height:30px;border-bottom:2px solid #3c3c3c"></div>
 <svg class="a" style="left:0;top:0" width="29" height="200">
  <g stroke="#2e2e2e" stroke-width="1" stroke-dasharray="1 1"><path d="M8 14.5h13M8 45.5h13M8 76.5h13M8 108.5h13M8 160.5h13"/></g>
  <g fill="none" stroke="#c8c8c8" stroke-width="1"><circle cx="11" cy="21" r="1.6"/><circle cx="11" cy="25" r="1.6"/></g>
  <rect x="9.4" y="27.5" width="3" height="3" fill="#c8c8c8"/>
  <path d="M14.5 21.5C18.5 19.5 19 25 16 30" stroke="#d0d0d0" stroke-width="1.6" fill="none"/><path d="M14 19.5L17 18.5L16.5 22Z" fill="#d0d0d0"/>
  <rect x="10.5" y="55" width="8" height="7" fill="#c8c8c8"/><path d="M11 55L9 49M13.5 55L12.5 48M16 55L17 48M18 55L20.5 50" stroke="#d0d0d0" stroke-width="1.3"/>
  <g fill="#c0c0c0"><rect x="7" y="82" width="2" height="1.5"/><rect x="7" y="85" width="2" height="1.5"/><rect x="7" y="88" width="2" height="1.5"/><rect x="10" y="82" width="3" height="1.5"/><rect x="10" y="85" width="3" height="1.5"/></g>
  <path d="M15 84.5a2.5 2.5 0 1 1 3 0V88H21V91H11V88H15Z" fill="#d0d0d0"/><rect x="11" y="91.5" width="10" height="1.5" fill="#d0d0d0"/>
  <text x="8.5" y="126.5" font-family="Liberation Sans" font-weight="bold" font-size="12" fill="#d4d4d4">A</text><path d="M20.5 115v11.5" stroke="#d4d4d4" stroke-width="1.2"/>
  <path d="M14 138h6M17.5 138v11M19.5 138v11" stroke="#d4d4d4" stroke-width="1.3"/><path d="M14.5 138a2.8 2.8 0 0 0 0 5.6H17.5V138Z" fill="#d4d4d4"/>
  <path d="M10 168L20 178M19.5 167.5L9.5 178" stroke="#d8d8d8" stroke-width="2.2" stroke-linecap="round"/><path d="M8 165.5a2.5 2.5 0 1 0 4 3" stroke="#d8d8d8" stroke-width="1.5" fill="none"/><path d="M18 166l3.5-1.5 1 1-1.5 3.5Z" fill="#d8d8d8"/>
 </svg>
</div>
<div class="a" style="left:525px;top:40px;width:155px;height:10px;background:#2f2f2f"></div>
<svg class="a" style="left:545.5px;top:43.5px" width="7" height="5"><path d="M3 0.5L0.8 2.5L3 4.5ZM6.2 0.5L4 2.5L6.2 4.5Z" fill="#d0d0d0"/></svg>
<div id="rpanel" class="a">
 <div class="a" style="left:-1px;top:0;width:125px;height:10px;background:#2f2f2f"></div>
 <div class="a" style="left:0;top:10px;width:124px;height:13px;background:#393939"></div>
 <div class="a" style="left:1px;top:10px;width:41px;height:13px;background:#454545"></div>
 <span class="a" style="left:5px;top:12.5px;font-size:7.4px;color:#b0b0b0;font-weight:bold;letter-spacing:-0.1px">Swatches</span>
 <div class="a" style="left:44px;top:10px;width:43px;height:13px;background:#535353"></div>
 <span class="a" style="left:48px;top:12.5px;font-size:7.6px;color:#f4f4f4;font-weight:bold;letter-spacing:-0.1px">Navigator</span>

 <div class="a" style="left:3.5px;top:57.5px;width:121px;height:219.5px;background:#fff;overflow:hidden">
  <svg width="121" height="220" style="position:absolute;left:0;top:0"><g transform="translate(9.2,-13.9) scale(0.332)"><use href="#art" stroke="#7b4a22" stroke-width="2.2"/></g>
  <path d="M1 10.8H125M1 10.3V207.5H125" fill="none" stroke="#f01e1e" stroke-width="1.6"/></svg>
 </div>
 <div class="a" style="left:0;top:312.5px;width:124px;height:12.5px;background:#4e4e4e;border-top:1px solid #444"></div>
 <div class="a" style="left:0;top:312.5px;width:43px;height:12.5px;background:#3b3b3b"></div>
 <span class="a" style="left:2px;top:315px;font-size:7px;color:#f0f0f0;font-weight:bold">25%</span>
 <svg class="a" style="left:45px;top:313px" width="79" height="12"><path d="M3 8.5L6.5 5.5L10 8.5Z" fill="#b8b8b8"/><rect x="23" y="2.5" width="60" height="4" rx="1" fill="#2e2e2e" stroke="#6a6a6a" stroke-width="0.6"/><path d="M40 9.5L44.5 4L49 9.5Z" fill="#d0d0d0"/></svg>
 <div class="a" style="left:0;top:325px;width:124px;height:2px;background:#3b3b3b"></div>
 <div class="a" style="left:0;top:327px;width:124px;height:12px;background:#393939"></div>
 <div class="a" style="left:0;top:327px;width:33px;height:13px;background:#535353"></div>
 <span class="a" style="left:4px;top:329.5px;font-size:7.3px;color:#f6f6f6;font-weight:bold">Layers</span>
 <div class="a" style="left:34px;top:327px;width:40px;height:12px;background:#444444"></div>
 <span class="a" style="left:37px;top:329.5px;font-size:7.1px;color:#c4c4c4;font-weight:bold">Channels</span>
 <div class="a" style="left:76px;top:327px;width:29px;height:12px;background:#444444"></div>
 <span class="a" style="left:81px;top:329.5px;font-size:7px;color:#b8b8b8;font-weight:bold">Paths</span>
 
 <div class="a" style="left:4px;top:345.5px;width:47px;height:11px;border-radius:3px;background:linear-gradient(#6a6a6a,#5a5a5a);border:1px solid #3f3f3f"></div>
 <svg class="a" style="left:6px;top:347px" width="10" height="9"><circle cx="5.5" cy="3.5" r="2.6" stroke="#d8d8d8" stroke-width="1.1" fill="none"/><path d="M3.6 5.4L1 8" stroke="#d8d8d8" stroke-width="1.3"/></svg>
 <span class="a" style="left:17px;top:347.5px;font-size:7.2px;color:#eaeaea;font-weight:bold">Kind</span>
 <svg class="a" style="left:43px;top:347px" width="6" height="9"><path d="M0.8 3.3L3 1L5.2 3.3ZM0.8 5.5L3 7.8L5.2 5.5Z" fill="#d6d6d6"/></svg>
 <svg class="a" style="left:58px;top:344px" width="66" height="14">
  <rect x="2.5" y="2.5" width="10" height="8.5" fill="#6a6a6a" stroke="#b0b0b0" stroke-width="1"/><path d="M4 10L7 6.5L9 8.5L11 7L11.5 10Z" fill="#c8c8c8"/>
  <circle cx="25" cy="7" r="4.6" fill="#c6c6c6"/><path d="M21.5 9.5L28.5 4.5" stroke="#6a6a6a" stroke-width="2"/>
  <text x="41" y="11.5" font-family="Liberation Serif" font-size="12.5" fill="#c6c6c6">T</text>
  <rect x="58" y="2.5" width="8.5" height="8.5" fill="none" stroke="#c0c0c0" stroke-width="1" stroke-dasharray="2 1.5"/>
 </svg>
 <div class="a" style="left:0;top:361px;width:124px;height:1px;background:#414141"></div>
 <div class="a" style="left:0;top:362px;width:124px;height:1px;background:#5c5c5c"></div>
 <div class="a" style="left:4px;top:366.5px;width:85px;height:11px;border-radius:3px;background:linear-gradient(#6a6a6a,#5a5a5a);border:1px solid #3f3f3f"></div>
 <span class="a" style="left:8px;top:368.5px;font-size:7.2px;color:#eaeaea;font-weight:bold">Normal</span>
 <svg class="a" style="left:80.5px;top:368px" width="6" height="9"><path d="M0.8 3.3L3 1L5.2 3.3ZM0.8 5.5L3 7.8L5.2 5.5Z" fill="#d6d6d6"/></svg>
 <span class="a" style="left:93px;top:369px;font-size:7.2px;color:#eaeaea;font-weight:bold">Opacity:</span>
 <div class="a" style="left:0;top:382.5px;width:124px;height:1px;background:#414141"></div>
 <div class="a" style="left:0;top:383.5px;width:124px;height:1px;background:#5c5c5c"></div>
 <span class="a" style="left:3px;top:390px;font-size:7.2px;color:#eaeaea;font-weight:bold">Lock:</span>
 <svg class="a" style="left:24px;top:387px" width="100" height="14">
  <rect x="2.5" y="2.5" width="9" height="9" fill="#5a5a5a" stroke="#c8c8c8" stroke-width="1"/><path d="M3 3h3v3h-3zM8 3h3v3h-3zM5.5 5.5h3v3h-3zM3 8h3v3h-3zM8 8h3v3h-3z" fill="#d8d8d8"/>
  <path d="M29 3L22 10" stroke="#c8c8c8" stroke-width="1.6"/><path d="M18 12.5C20 12.5 22 11.5 22.5 9.5L20.5 8.5C19.5 10 19 11.5 18 12.5Z" fill="#c8c8c8"/>
  <path d="M40 2v10M35 7h10M40 1.5L38.2 3.5h3.6ZM40 12.5L38.2 10.5h3.6ZM34.5 7L36.5 5.2v3.6ZM45.5 7L43.5 5.2v3.6Z" stroke="#c8c8c8" stroke-width="1" fill="#c8c8c8"/>
  <rect x="53.5" y="6" width="8" height="6.5" rx="1" fill="#c8c8c8"/><path d="M55 6.5V4.5a2.5 2.5 0 0 1 5 0V6.5" stroke="#c8c8c8" stroke-width="1.2" fill="none"/>
 </svg>
 <span class="a" style="left:109px;top:390px;font-size:7.2px;color:#eaeaea;font-weight:bold">Fill:</span>
 <div class="a" style="left:0;top:404.5px;width:124px;height:1px;background:#3a3a3a"></div>
 <div class="a" style="left:23px;top:405.5px;width:1px;height:222px;background:#404040"></div>
 <div class="a" style="left:24px;top:405.5px;width:100px;height:29px;background:#5a6a81"></div>
 <div class="a" style="left:24px;top:406px;width:23px;height:28px;border:1px solid #c6cede;background:#2c3a4e"></div>
 <div class="a ck" style="left:26.5px;top:408.5px;width:18px;height:23px"></div>
 <svg class="a" style="left:26.5px;top:408.5px" width="18" height="23"><g fill="#8a5a30"><circle cx="4" cy="9" r="1.2"/><circle cx="7" cy="11" r="0.9"/><circle cx="10" cy="9.5" r="1"/><circle cx="13" cy="10" r="1.1"/><circle cx="6" cy="13" r="0.8"/><circle cx="9" cy="14" r="1"/><circle cx="12.5" cy="13.5" r="0.9"/><path d="M5 16h9" stroke="#8a5a30" stroke-width="0.8"/></g></svg>
 <span class="a" style="left:49px;top:417px;font-size:7.3px;color:#f4f4f4;font-weight:bold;letter-spacing:-0.1px">Layer 6</span>
 <span class="a" style="left:50px;top:438px;font-size:7.3px;color:#eeeeee;font-weight:bold;letter-spacing:-0.2px">Effects</span>
 <span class="a" style="left:63px;top:453px;font-size:7.3px;color:#eeeeee;font-weight:bold;letter-spacing:-0.2px">Color Overlay</span>
 <div class="a" style="left:0;top:462.5px;width:124px;height:1px;background:#3a3a3a"></div>
 <div class="a" style="left:26px;top:466px;width:24.5px;height:24px;border-radius:2px;background:#1e1e1e"></div>
 <div class="a ck" style="left:28px;top:468px;width:20.5px;height:20px"></div>
 <div class="a" style="left:40px;top:480px;width:11px;height:11px;background:#535353"></div>
 <div class="a" style="left:41px;top:481px;width:9px;height:9px;background:#4a4a4a;border:1px solid #6a6a6a"></div>
 <div class="a" style="left:43.5px;top:483.5px;width:4px;height:4px;background:#2a2a2a"></div>
 <span class="a" style="left:56px;top:476px;font-size:7.3px;color:#eeeeee;font-weight:bold;letter-spacing:-0.2px">Ellipse 1</span>
 <div class="a" style="left:0;top:492.2px;width:124px;height:1px;background:#3a3a3a"></div>
 <div class="a" style="left:26px;top:495.5px;width:18.5px;height:24.5px;border-radius:2px;background:#1e1e1e"></div>
 <div class="a ck" style="left:28px;top:497.5px;width:14.5px;height:20.5px"></div>
 <span class="a" style="left:49px;top:505px;font-size:7.3px;color:#eeeeee;font-weight:bold;letter-spacing:-0.2px">Shape 1 copy</span>
 <div class="a" style="left:0;top:522px;width:124px;height:1px;background:#3a3a3a"></div>
 <span class="a" style="left:56px;top:534.5px;font-size:7.3px;color:#eeeeee;font-weight:bold;letter-spacing:0.1px">A&nbsp;&nbsp;FATHER</span>
 <span class="a" style="left:50px;top:556px;font-size:7.3px;color:#eeeeee;font-weight:bold;letter-spacing:-0.2px">Effects</span>
 <span class="a" style="left:63px;top:570px;font-size:7.3px;color:#eeeeee;font-weight:bold;letter-spacing:-0.2px">Stroke</span>
 <div class="a" style="left:0;top:581px;width:124px;height:1px;background:#3a3a3a"></div>
 <span class="a" style="left:56px;top:592.5px;font-size:7.3px;color:#eeeeee;font-weight:bold;letter-spacing:-0.2px">YOU GROW</span>
 <span class="a" style="left:50px;top:613px;font-size:7.3px;color:#eeeeee;font-weight:bold;letter-spacing:-0.2px">Effects</span>
 <div class="a" style="left:0;top:627px;width:124px;height:1px;background:#3a3a3a"></div>
 <svg class="a" style="left:0;top:405px" width="124" height="275">
  <g fill="#bdbdbd" stroke="#c4c4c4" stroke-width="1.1">
   <path d="M7 15C9.5 11.5 14 11.5 16.5 15C14 18.5 9.5 18.5 7 15Z"/>
   <path d="M38.5 35.5C41 32.5 45 32.5 47.5 35.5C45 38.5 41 38.5 38.5 35.5Z"/>
   <path d="M51 50.5C53.5 47.5 57.5 47.5 60 50.5C57.5 53.5 53.5 53.5 51 50.5Z"/>
  </g>
  <g fill="#2a2a2a"><circle cx="11.7" cy="15.3" r="1.9"/><circle cx="43" cy="35.7" r="1.6"/><circle cx="55.5" cy="50.7" r="1.6"/></g>
  <g fill="none" stroke="#8a8a8a" stroke-width="1">
   <path d="M38.5 155C41 152 45 152 47.5 155C45 158 41 158 38.5 155Z"/>
   <path d="M51 169C53.5 166 57.5 166 60 169C57.5 172 53.5 172 51 169Z"/>
   <path d="M38.5 212C41 209 45 209 47.5 212C45 215 41 215 38.5 212Z"/>
  </g>
  <g fill="#474747" stroke="#404040" stroke-width="1"><rect x="7" y="68.5" width="9" height="9"/><rect x="7" y="98.5" width="9" height="9"/><rect x="7" y="127.5" width="9" height="9"/><rect x="7" y="186" width="9" height="9"/></g>
  <g fill="none" stroke="#5e5e5e" stroke-width="0.8"><rect x="8" y="69.5" width="7" height="7"/><rect x="8" y="99.5" width="7" height="7"/><rect x="8" y="128.5" width="7" height="7"/><rect x="8" y="187" width="7" height="7"/></g>
  <g fill="none" stroke="#d0d0d0" stroke-width="1.3">
   <path d="M36.5 127.5L40.5 125.5M38.5 126.5L36.5 132.5M34 134.5h6M31.5 140.5C34 136 40 136 43 140.5"/>
   <path d="M36.5 185.5L40.5 183.5M38.5 184.5L36.5 190.5M34 192.5h6M31.5 198.5C34 194 40 194 43 198.5"/>
  </g>
  <g fill="none" stroke="#c0c0c0" stroke-width="1.3">
   <path d="M8.5 233C10 230.5 12.5 230.5 14 233M8.5 233C10 235.5 12.5 235.5 14 233M11.5 233h6M15.5 233C17 230.5 19.5 230.5 21 233M15.5 233C17 235.5 19.5 235.5 21 233"/>
  </g>
  <text x="29.5" y="238" font-family="Liberation Serif" font-style="italic" font-size="12" fill="#c8c8c8">fx</text><circle cx="41.5" cy="237" r="0.9" fill="#c8c8c8"/>
  <rect x="49.5" y="227" width="10" height="11" fill="#c8c8c8"/><circle cx="54.5" cy="232.5" r="2.8" fill="#333"/>
  <circle cx="75" cy="233" r="4.8" fill="#c8c8c8"/><path d="M72 236L78 230" stroke="#555" stroke-width="1.6"/><circle cx="80.5" cy="237" r="0.9" fill="#c8c8c8"/>
  <path d="M91 228h3.5l1 1.5H100v9H91Z" fill="#c8c8c8"/><path d="M92 231.5h7" stroke="#888" stroke-width="0.8"/>
  <rect x="111" y="227.5" width="8.5" height="11" fill="#c8c8c8"/><path d="M113.5 233h4M115.5 231v4" stroke="#555" stroke-width="1" fill="none"/>
 </svg>

</div>
</body></html>
